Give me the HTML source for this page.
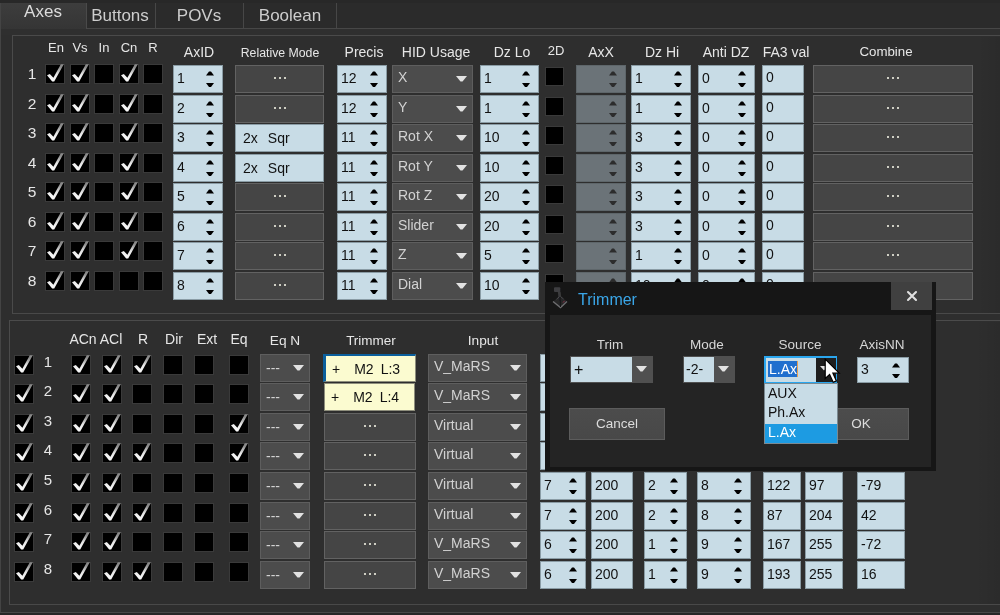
<!DOCTYPE html><html><head><meta charset="utf-8"><style>

html,body{margin:0;padding:0;}
body{width:1000px;height:615px;overflow:hidden;position:relative;background:#2e2e2e;font-family:"Liberation Sans", sans-serif;}
.t{position:absolute;white-space:nowrap;will-change:transform;}
.cb{position:absolute;background:#000;border:1px solid #3a3a3a;}
.sp{position:absolute;border:1px solid #8a9ca5;}
.cm{position:absolute;background:#4c4c4c;border:1px solid #5e5e5e;}
.bt{position:absolute;background:#454545;border:1px solid #626262;}
.dt{position:absolute;width:2px;height:2px;background:#cfcfc4;}
.dots{position:absolute;left:0;right:0;text-align:center;font-size:14px;line-height:8px;color:#d8d8d8;letter-spacing:1px;}
.ln{position:absolute;background:#474747;}

</style></head><body>
<svg width="0" height="0" style="position:absolute;left:0;top:0"><defs><linearGradient id="cg" x1="0" y1="1" x2="0.3" y2="0"><stop offset="0" stop-color="#ffffff"/><stop offset="0.55" stop-color="#e6e6e6"/><stop offset="1" stop-color="#8a8a8a"/></linearGradient></defs></svg>
<div style="position:absolute;left:0px;top:0px;width:1000px;height:28px;background:#2b2b2b"></div>
<div style="position:absolute;left:0px;top:0px;width:1000px;height:3px;background:#282828"></div>
<div style="position:absolute;left:0px;top:3px;width:1px;height:610px;background:#444"></div>
<div style="position:absolute;left:1px;top:3px;width:85px;height:26px;background:linear-gradient(#3d3d3d,#353535)"></div>
<div style="position:absolute;left:86px;top:3px;width:1px;height:26px;background:#4a4a4a"></div>
<div style="position:absolute;left:87px;top:28px;width:913px;height:1px;background:#474747"></div>
<div style="position:absolute;left:155px;top:3px;width:1px;height:25px;background:#474747"></div>
<div style="position:absolute;left:243px;top:3px;width:1px;height:25px;background:#474747"></div>
<div style="position:absolute;left:336px;top:3px;width:1px;height:25px;background:#474747"></div>
<div class="t" style="left:-157px;width:400px;text-align:center;top:3.30px;font-size:17px;line-height:17px;color:#dcdcdc;">Axes</div>
<div class="t" style="left:-80.5px;width:400px;text-align:center;top:7.00px;font-size:17px;line-height:17px;color:#cdcdcd;">Buttons</div>
<div class="t" style="left:-1px;width:400px;text-align:center;top:7.00px;font-size:17px;line-height:17px;color:#cdcdcd;">POVs</div>
<div class="t" style="left:90px;width:400px;text-align:center;top:7.00px;font-size:17px;line-height:17px;color:#cdcdcd;">Boolean</div>
<div style="position:absolute;left:1px;top:29px;width:999px;height:6px;background:#2f2f2f"></div>
<div style="position:absolute;left:0px;top:612px;width:1000px;height:1px;background:#474747"></div>
<div style="position:absolute;left:0px;top:613px;width:1000px;height:2px;background:#262626"></div>
<div style="position:absolute;left:12px;top:35px;width:988px;height:1px;background:#4a4a4a"></div>
<div style="position:absolute;left:12px;top:35px;width:1px;height:279px;background:#4a4a4a"></div>
<div style="position:absolute;left:12px;top:313px;width:988px;height:1px;background:#494949"></div>
<div style="position:absolute;left:9px;top:320px;width:991px;height:1px;background:#4b4b4b"></div>
<div style="position:absolute;left:9px;top:320px;width:1px;height:285px;background:#4b4b4b"></div>
<div style="position:absolute;left:9px;top:604px;width:991px;height:1px;background:#494949"></div>
<div style="position:absolute;left:978px;top:37px;width:22px;height:276px;background:linear-gradient(90deg, rgba(0,0,0,0), rgba(0,0,0,0.07))"></div>
<div style="position:absolute;left:975px;top:322px;width:25px;height:282px;background:linear-gradient(90deg, rgba(0,0,0,0), rgba(0,0,0,0.07))"></div>
<div class="t" style="left:-144.5px;width:400px;text-align:center;top:40.94px;font-size:13px;line-height:13px;color:#e6e6e6;">En</div>
<div class="t" style="left:-120.5px;width:400px;text-align:center;top:40.94px;font-size:13px;line-height:13px;color:#e6e6e6;">Vs</div>
<div class="t" style="left:-96px;width:400px;text-align:center;top:40.94px;font-size:13px;line-height:13px;color:#e6e6e6;">In</div>
<div class="t" style="left:-71.5px;width:400px;text-align:center;top:40.94px;font-size:13px;line-height:13px;color:#e6e6e6;">Cn</div>
<div class="t" style="left:-47px;width:400px;text-align:center;top:40.94px;font-size:13px;line-height:13px;color:#e6e6e6;">R</div>
<div class="t" style="left:-1px;width:400px;text-align:center;top:44.78px;font-size:14px;line-height:14px;color:#e6e6e6;">AxID</div>
<div class="t" style="left:80px;width:400px;text-align:center;top:46.55px;font-size:12.3px;line-height:12.3px;color:#e6e6e6;">Relative Mode</div>
<div class="t" style="left:164px;width:400px;text-align:center;top:44.78px;font-size:14px;line-height:14px;color:#e6e6e6;">Precis</div>
<div class="t" style="left:236px;width:400px;text-align:center;top:44.78px;font-size:14px;line-height:14px;color:#e6e6e6;">HID Usage</div>
<div class="t" style="left:311.5px;width:400px;text-align:center;top:44.78px;font-size:14px;line-height:14px;color:#e6e6e6;">Dz Lo</div>
<div class="t" style="left:355.5px;width:400px;text-align:center;top:43.94px;font-size:13px;line-height:13px;color:#e6e6e6;">2D</div>
<div class="t" style="left:400.5px;width:400px;text-align:center;top:44.78px;font-size:14px;line-height:14px;color:#e6e6e6;">AxX</div>
<div class="t" style="left:462px;width:400px;text-align:center;top:44.78px;font-size:14px;line-height:14px;color:#e6e6e6;">Dz Hi</div>
<div class="t" style="left:526px;width:400px;text-align:center;top:44.78px;font-size:14px;line-height:14px;color:#e6e6e6;">Anti DZ</div>
<div class="t" style="left:586px;width:400px;text-align:center;top:44.78px;font-size:14px;line-height:14px;color:#e6e6e6;">FA3 val</div>
<div class="t" style="left:686px;width:400px;text-align:center;top:45.19px;font-size:13.3px;line-height:13.3px;color:#e6e6e6;">Combine</div>
<div class="t" style="left:-168.5px;width:400px;text-align:center;top:65.54px;font-size:15.5px;line-height:15.5px;color:#e6e6e6;">1</div>
<div class="cb" style="left:45px;top:63.5px;width:18px;height:18px;"><svg width="20" height="22" viewBox="0 0 20 22" style="position:absolute;left:0;top:-2px"><path d="M1 12.3 L3.8 10.9 L7.4 14.8 L14.8 1.3 L17.8 1.3 L8.2 18.5 L6.2 18.5 Z" fill="url(#cg)"/></svg></div>
<div class="cb" style="left:69.5px;top:63.5px;width:18px;height:18px;"><svg width="20" height="22" viewBox="0 0 20 22" style="position:absolute;left:0;top:-2px"><path d="M1 12.3 L3.8 10.9 L7.4 14.8 L14.8 1.3 L17.8 1.3 L8.2 18.5 L6.2 18.5 Z" fill="url(#cg)"/></svg></div>
<div class="cb" style="left:94px;top:63.5px;width:18px;height:18px;"></div>
<div class="cb" style="left:118.5px;top:63.5px;width:18px;height:18px;"><svg width="20" height="22" viewBox="0 0 20 22" style="position:absolute;left:0;top:-2px"><path d="M1 12.3 L3.8 10.9 L7.4 14.8 L14.8 1.3 L17.8 1.3 L8.2 18.5 L6.2 18.5 Z" fill="url(#cg)"/></svg></div>
<div class="cb" style="left:143px;top:63.5px;width:18px;height:18px;"></div>
<div class="sp" style="left:173px;top:65px;width:48px;height:26px;background:#c8dce6;border-color:#8a9ca5"><div class="t" style="left:3px;top:4.7px;font-size:14px;line-height:14px;color:#111">1</div><svg width="8" height="5" style="position:absolute;left:32px;top:5px"><path d="M0 4.5 L3 0.5 L5 0.5 L8 4.5 Z" fill="#000"/></svg><svg width="8" height="5" style="position:absolute;left:32px;top:16.8px"><path d="M0 0 L8 0 L5 4 L3 4 Z" fill="#000"/></svg></div>
<div class="bt" style="left:235px;top:65px;width:87px;height:26px;"><div class="dt" style="left:37.5px;top:11.4px"></div><div class="dt" style="left:42.5px;top:11.4px"></div><div class="dt" style="left:47.5px;top:11.4px"></div></div>
<div class="sp" style="left:337px;top:65px;width:48px;height:26px;background:#c8dce6;border-color:#8a9ca5"><div class="t" style="left:3px;top:4.7px;font-size:14px;line-height:14px;color:#111">12</div><svg width="8" height="5" style="position:absolute;left:32px;top:5px"><path d="M0 4.5 L3 0.5 L5 0.5 L8 4.5 Z" fill="#000"/></svg><svg width="8" height="5" style="position:absolute;left:32px;top:16.8px"><path d="M0 0 L8 0 L5 4 L3 4 Z" fill="#000"/></svg></div>
<div class="cm" style="left:392px;top:65px;width:79px;height:26px;"><div class="t" style="left:5px;top:4.3px;font-size:14px;line-height:14px;color:#d2d2d2">X</div><svg width="11" height="6" style="position:absolute;left:63px;top:10px"><path d="M0 0 L11 0 L6.5 5.5 L4.5 5.5 Z" fill="#e2e2e2"/></svg></div>
<div class="sp" style="left:480px;top:65px;width:57px;height:26px;background:#c8dce6;border-color:#8a9ca5"><div class="t" style="left:3px;top:4.7px;font-size:14px;line-height:14px;color:#111">1</div><svg width="8" height="5" style="position:absolute;left:41px;top:5px"><path d="M0 4.5 L3 0.5 L5 0.5 L8 4.5 Z" fill="#000"/></svg><svg width="8" height="5" style="position:absolute;left:41px;top:16.8px"><path d="M0 0 L8 0 L5 4 L3 4 Z" fill="#000"/></svg></div>
<div class="cb" style="left:544.5px;top:66.5px;width:17px;height:17px;"></div>
<div class="sp" style="left:576px;top:65px;width:47.5px;height:26px;background:#6b7378;border-color:#5e666a"><svg width="8" height="5" style="position:absolute;left:31.5px;top:5px"><path d="M0 4.5 L3 0.5 L5 0.5 L8 4.5 Z" fill="#2c2c2c"/></svg><svg width="8" height="5" style="position:absolute;left:31.5px;top:16.8px"><path d="M0 0 L8 0 L5 4 L3 4 Z" fill="#2c2c2c"/></svg></div>
<div class="sp" style="left:631px;top:65px;width:57.5px;height:26px;background:#c8dce6;border-color:#8a9ca5"><div class="t" style="left:3px;top:4.7px;font-size:14px;line-height:14px;color:#111">1</div><svg width="8" height="5" style="position:absolute;left:41.5px;top:5px"><path d="M0 4.5 L3 0.5 L5 0.5 L8 4.5 Z" fill="#000"/></svg><svg width="8" height="5" style="position:absolute;left:41.5px;top:16.8px"><path d="M0 0 L8 0 L5 4 L3 4 Z" fill="#000"/></svg></div>
<div class="sp" style="left:697.5px;top:65px;width:55px;height:26px;background:#c8dce6;border-color:#8a9ca5"><div class="t" style="left:3px;top:4.7px;font-size:14px;line-height:14px;color:#111">0</div><svg width="8" height="5" style="position:absolute;left:39px;top:5px"><path d="M0 4.5 L3 0.5 L5 0.5 L8 4.5 Z" fill="#000"/></svg><svg width="8" height="5" style="position:absolute;left:39px;top:16.8px"><path d="M0 0 L8 0 L5 4 L3 4 Z" fill="#000"/></svg></div>
<div class="sp" style="left:761.5px;top:65px;width:40px;height:26px;background:#c8dce6;border-color:#8a9ca5;box-sizing:content-box;"><div class="t" style="left:3px;top:4.3px;font-size:14px;line-height:14px;color:#111;white-space:pre">0</div></div>
<div class="bt" style="left:813px;top:65px;width:158px;height:26px;"><div class="dt" style="left:73.0px;top:11.4px"></div><div class="dt" style="left:78.0px;top:11.4px"></div><div class="dt" style="left:83.0px;top:11.4px"></div></div>
<div class="t" style="left:-168.5px;width:400px;text-align:center;top:95.54px;font-size:15.5px;line-height:15.5px;color:#e6e6e6;">2</div>
<div class="cb" style="left:45px;top:93.5px;width:18px;height:18px;"><svg width="20" height="22" viewBox="0 0 20 22" style="position:absolute;left:0;top:-2px"><path d="M1 12.3 L3.8 10.9 L7.4 14.8 L14.8 1.3 L17.8 1.3 L8.2 18.5 L6.2 18.5 Z" fill="url(#cg)"/></svg></div>
<div class="cb" style="left:69.5px;top:93.5px;width:18px;height:18px;"><svg width="20" height="22" viewBox="0 0 20 22" style="position:absolute;left:0;top:-2px"><path d="M1 12.3 L3.8 10.9 L7.4 14.8 L14.8 1.3 L17.8 1.3 L8.2 18.5 L6.2 18.5 Z" fill="url(#cg)"/></svg></div>
<div class="cb" style="left:94px;top:93.5px;width:18px;height:18px;"></div>
<div class="cb" style="left:118.5px;top:93.5px;width:18px;height:18px;"><svg width="20" height="22" viewBox="0 0 20 22" style="position:absolute;left:0;top:-2px"><path d="M1 12.3 L3.8 10.9 L7.4 14.8 L14.8 1.3 L17.8 1.3 L8.2 18.5 L6.2 18.5 Z" fill="url(#cg)"/></svg></div>
<div class="cb" style="left:143px;top:93.5px;width:18px;height:18px;"></div>
<div class="sp" style="left:173px;top:95px;width:48px;height:26px;background:#c8dce6;border-color:#8a9ca5"><div class="t" style="left:3px;top:4.7px;font-size:14px;line-height:14px;color:#111">2</div><svg width="8" height="5" style="position:absolute;left:32px;top:5px"><path d="M0 4.5 L3 0.5 L5 0.5 L8 4.5 Z" fill="#000"/></svg><svg width="8" height="5" style="position:absolute;left:32px;top:16.8px"><path d="M0 0 L8 0 L5 4 L3 4 Z" fill="#000"/></svg></div>
<div class="bt" style="left:235px;top:95px;width:87px;height:26px;"><div class="dt" style="left:37.5px;top:11.4px"></div><div class="dt" style="left:42.5px;top:11.4px"></div><div class="dt" style="left:47.5px;top:11.4px"></div></div>
<div class="sp" style="left:337px;top:95px;width:48px;height:26px;background:#c8dce6;border-color:#8a9ca5"><div class="t" style="left:3px;top:4.7px;font-size:14px;line-height:14px;color:#111">12</div><svg width="8" height="5" style="position:absolute;left:32px;top:5px"><path d="M0 4.5 L3 0.5 L5 0.5 L8 4.5 Z" fill="#000"/></svg><svg width="8" height="5" style="position:absolute;left:32px;top:16.8px"><path d="M0 0 L8 0 L5 4 L3 4 Z" fill="#000"/></svg></div>
<div class="cm" style="left:392px;top:95px;width:79px;height:26px;"><div class="t" style="left:5px;top:4.3px;font-size:14px;line-height:14px;color:#d2d2d2">Y</div><svg width="11" height="6" style="position:absolute;left:63px;top:10px"><path d="M0 0 L11 0 L6.5 5.5 L4.5 5.5 Z" fill="#e2e2e2"/></svg></div>
<div class="sp" style="left:480px;top:95px;width:57px;height:26px;background:#c8dce6;border-color:#8a9ca5"><div class="t" style="left:3px;top:4.7px;font-size:14px;line-height:14px;color:#111">1</div><svg width="8" height="5" style="position:absolute;left:41px;top:5px"><path d="M0 4.5 L3 0.5 L5 0.5 L8 4.5 Z" fill="#000"/></svg><svg width="8" height="5" style="position:absolute;left:41px;top:16.8px"><path d="M0 0 L8 0 L5 4 L3 4 Z" fill="#000"/></svg></div>
<div class="cb" style="left:544.5px;top:96.5px;width:17px;height:17px;"></div>
<div class="sp" style="left:576px;top:95px;width:47.5px;height:26px;background:#6b7378;border-color:#5e666a"><svg width="8" height="5" style="position:absolute;left:31.5px;top:5px"><path d="M0 4.5 L3 0.5 L5 0.5 L8 4.5 Z" fill="#2c2c2c"/></svg><svg width="8" height="5" style="position:absolute;left:31.5px;top:16.8px"><path d="M0 0 L8 0 L5 4 L3 4 Z" fill="#2c2c2c"/></svg></div>
<div class="sp" style="left:631px;top:95px;width:57.5px;height:26px;background:#c8dce6;border-color:#8a9ca5"><div class="t" style="left:3px;top:4.7px;font-size:14px;line-height:14px;color:#111">1</div><svg width="8" height="5" style="position:absolute;left:41.5px;top:5px"><path d="M0 4.5 L3 0.5 L5 0.5 L8 4.5 Z" fill="#000"/></svg><svg width="8" height="5" style="position:absolute;left:41.5px;top:16.8px"><path d="M0 0 L8 0 L5 4 L3 4 Z" fill="#000"/></svg></div>
<div class="sp" style="left:697.5px;top:95px;width:55px;height:26px;background:#c8dce6;border-color:#8a9ca5"><div class="t" style="left:3px;top:4.7px;font-size:14px;line-height:14px;color:#111">0</div><svg width="8" height="5" style="position:absolute;left:39px;top:5px"><path d="M0 4.5 L3 0.5 L5 0.5 L8 4.5 Z" fill="#000"/></svg><svg width="8" height="5" style="position:absolute;left:39px;top:16.8px"><path d="M0 0 L8 0 L5 4 L3 4 Z" fill="#000"/></svg></div>
<div class="sp" style="left:761.5px;top:95px;width:40px;height:26px;background:#c8dce6;border-color:#8a9ca5;box-sizing:content-box;"><div class="t" style="left:3px;top:4.3px;font-size:14px;line-height:14px;color:#111;white-space:pre">0</div></div>
<div class="bt" style="left:813px;top:95px;width:158px;height:26px;"><div class="dt" style="left:73.0px;top:11.4px"></div><div class="dt" style="left:78.0px;top:11.4px"></div><div class="dt" style="left:83.0px;top:11.4px"></div></div>
<div class="t" style="left:-168.5px;width:400px;text-align:center;top:124.54px;font-size:15.5px;line-height:15.5px;color:#e6e6e6;">3</div>
<div class="cb" style="left:45px;top:122.5px;width:18px;height:18px;"><svg width="20" height="22" viewBox="0 0 20 22" style="position:absolute;left:0;top:-2px"><path d="M1 12.3 L3.8 10.9 L7.4 14.8 L14.8 1.3 L17.8 1.3 L8.2 18.5 L6.2 18.5 Z" fill="url(#cg)"/></svg></div>
<div class="cb" style="left:69.5px;top:122.5px;width:18px;height:18px;"><svg width="20" height="22" viewBox="0 0 20 22" style="position:absolute;left:0;top:-2px"><path d="M1 12.3 L3.8 10.9 L7.4 14.8 L14.8 1.3 L17.8 1.3 L8.2 18.5 L6.2 18.5 Z" fill="url(#cg)"/></svg></div>
<div class="cb" style="left:94px;top:122.5px;width:18px;height:18px;"></div>
<div class="cb" style="left:118.5px;top:122.5px;width:18px;height:18px;"><svg width="20" height="22" viewBox="0 0 20 22" style="position:absolute;left:0;top:-2px"><path d="M1 12.3 L3.8 10.9 L7.4 14.8 L14.8 1.3 L17.8 1.3 L8.2 18.5 L6.2 18.5 Z" fill="url(#cg)"/></svg></div>
<div class="cb" style="left:143px;top:122.5px;width:18px;height:18px;"></div>
<div class="sp" style="left:173px;top:124px;width:48px;height:26px;background:#c8dce6;border-color:#8a9ca5"><div class="t" style="left:3px;top:4.7px;font-size:14px;line-height:14px;color:#111">3</div><svg width="8" height="5" style="position:absolute;left:32px;top:5px"><path d="M0 4.5 L3 0.5 L5 0.5 L8 4.5 Z" fill="#000"/></svg><svg width="8" height="5" style="position:absolute;left:32px;top:16.8px"><path d="M0 0 L8 0 L5 4 L3 4 Z" fill="#000"/></svg></div>
<div class="sp" style="left:235px;top:124px;width:87px;height:26px;background:#c8dce6;border-color:#8a9ca5;box-sizing:content-box;"><div class="t" style="left:7px;top:5.8px;font-size:14px;line-height:14px;color:#111;white-space:pre">2x<span style="margin-left:10px">Sqr</span></div></div>
<div class="sp" style="left:337px;top:124px;width:48px;height:26px;background:#c8dce6;border-color:#8a9ca5"><div class="t" style="left:3px;top:4.7px;font-size:14px;line-height:14px;color:#111">11</div><svg width="8" height="5" style="position:absolute;left:32px;top:5px"><path d="M0 4.5 L3 0.5 L5 0.5 L8 4.5 Z" fill="#000"/></svg><svg width="8" height="5" style="position:absolute;left:32px;top:16.8px"><path d="M0 0 L8 0 L5 4 L3 4 Z" fill="#000"/></svg></div>
<div class="cm" style="left:392px;top:124px;width:79px;height:26px;"><div class="t" style="left:5px;top:4.3px;font-size:14px;line-height:14px;color:#d2d2d2">Rot X</div><svg width="11" height="6" style="position:absolute;left:63px;top:10px"><path d="M0 0 L11 0 L6.5 5.5 L4.5 5.5 Z" fill="#e2e2e2"/></svg></div>
<div class="sp" style="left:480px;top:124px;width:57px;height:26px;background:#c8dce6;border-color:#8a9ca5"><div class="t" style="left:3px;top:4.7px;font-size:14px;line-height:14px;color:#111">10</div><svg width="8" height="5" style="position:absolute;left:41px;top:5px"><path d="M0 4.5 L3 0.5 L5 0.5 L8 4.5 Z" fill="#000"/></svg><svg width="8" height="5" style="position:absolute;left:41px;top:16.8px"><path d="M0 0 L8 0 L5 4 L3 4 Z" fill="#000"/></svg></div>
<div class="cb" style="left:544.5px;top:125.5px;width:17px;height:17px;"></div>
<div class="sp" style="left:576px;top:124px;width:47.5px;height:26px;background:#6b7378;border-color:#5e666a"><svg width="8" height="5" style="position:absolute;left:31.5px;top:5px"><path d="M0 4.5 L3 0.5 L5 0.5 L8 4.5 Z" fill="#2c2c2c"/></svg><svg width="8" height="5" style="position:absolute;left:31.5px;top:16.8px"><path d="M0 0 L8 0 L5 4 L3 4 Z" fill="#2c2c2c"/></svg></div>
<div class="sp" style="left:631px;top:124px;width:57.5px;height:26px;background:#c8dce6;border-color:#8a9ca5"><div class="t" style="left:3px;top:4.7px;font-size:14px;line-height:14px;color:#111">3</div><svg width="8" height="5" style="position:absolute;left:41.5px;top:5px"><path d="M0 4.5 L3 0.5 L5 0.5 L8 4.5 Z" fill="#000"/></svg><svg width="8" height="5" style="position:absolute;left:41.5px;top:16.8px"><path d="M0 0 L8 0 L5 4 L3 4 Z" fill="#000"/></svg></div>
<div class="sp" style="left:697.5px;top:124px;width:55px;height:26px;background:#c8dce6;border-color:#8a9ca5"><div class="t" style="left:3px;top:4.7px;font-size:14px;line-height:14px;color:#111">0</div><svg width="8" height="5" style="position:absolute;left:39px;top:5px"><path d="M0 4.5 L3 0.5 L5 0.5 L8 4.5 Z" fill="#000"/></svg><svg width="8" height="5" style="position:absolute;left:39px;top:16.8px"><path d="M0 0 L8 0 L5 4 L3 4 Z" fill="#000"/></svg></div>
<div class="sp" style="left:761.5px;top:124px;width:40px;height:26px;background:#c8dce6;border-color:#8a9ca5;box-sizing:content-box;"><div class="t" style="left:3px;top:4.3px;font-size:14px;line-height:14px;color:#111;white-space:pre">0</div></div>
<div class="bt" style="left:813px;top:124px;width:158px;height:26px;"><div class="dt" style="left:73.0px;top:11.4px"></div><div class="dt" style="left:78.0px;top:11.4px"></div><div class="dt" style="left:83.0px;top:11.4px"></div></div>
<div class="t" style="left:-168.5px;width:400px;text-align:center;top:154.54px;font-size:15.5px;line-height:15.5px;color:#e6e6e6;">4</div>
<div class="cb" style="left:45px;top:152.5px;width:18px;height:18px;"><svg width="20" height="22" viewBox="0 0 20 22" style="position:absolute;left:0;top:-2px"><path d="M1 12.3 L3.8 10.9 L7.4 14.8 L14.8 1.3 L17.8 1.3 L8.2 18.5 L6.2 18.5 Z" fill="url(#cg)"/></svg></div>
<div class="cb" style="left:69.5px;top:152.5px;width:18px;height:18px;"><svg width="20" height="22" viewBox="0 0 20 22" style="position:absolute;left:0;top:-2px"><path d="M1 12.3 L3.8 10.9 L7.4 14.8 L14.8 1.3 L17.8 1.3 L8.2 18.5 L6.2 18.5 Z" fill="url(#cg)"/></svg></div>
<div class="cb" style="left:94px;top:152.5px;width:18px;height:18px;"></div>
<div class="cb" style="left:118.5px;top:152.5px;width:18px;height:18px;"><svg width="20" height="22" viewBox="0 0 20 22" style="position:absolute;left:0;top:-2px"><path d="M1 12.3 L3.8 10.9 L7.4 14.8 L14.8 1.3 L17.8 1.3 L8.2 18.5 L6.2 18.5 Z" fill="url(#cg)"/></svg></div>
<div class="cb" style="left:143px;top:152.5px;width:18px;height:18px;"></div>
<div class="sp" style="left:173px;top:154px;width:48px;height:26px;background:#c8dce6;border-color:#8a9ca5"><div class="t" style="left:3px;top:4.7px;font-size:14px;line-height:14px;color:#111">4</div><svg width="8" height="5" style="position:absolute;left:32px;top:5px"><path d="M0 4.5 L3 0.5 L5 0.5 L8 4.5 Z" fill="#000"/></svg><svg width="8" height="5" style="position:absolute;left:32px;top:16.8px"><path d="M0 0 L8 0 L5 4 L3 4 Z" fill="#000"/></svg></div>
<div class="sp" style="left:235px;top:154px;width:87px;height:26px;background:#c8dce6;border-color:#8a9ca5;box-sizing:content-box;"><div class="t" style="left:7px;top:5.8px;font-size:14px;line-height:14px;color:#111;white-space:pre">2x<span style="margin-left:10px">Sqr</span></div></div>
<div class="sp" style="left:337px;top:154px;width:48px;height:26px;background:#c8dce6;border-color:#8a9ca5"><div class="t" style="left:3px;top:4.7px;font-size:14px;line-height:14px;color:#111">11</div><svg width="8" height="5" style="position:absolute;left:32px;top:5px"><path d="M0 4.5 L3 0.5 L5 0.5 L8 4.5 Z" fill="#000"/></svg><svg width="8" height="5" style="position:absolute;left:32px;top:16.8px"><path d="M0 0 L8 0 L5 4 L3 4 Z" fill="#000"/></svg></div>
<div class="cm" style="left:392px;top:154px;width:79px;height:26px;"><div class="t" style="left:5px;top:4.3px;font-size:14px;line-height:14px;color:#d2d2d2">Rot Y</div><svg width="11" height="6" style="position:absolute;left:63px;top:10px"><path d="M0 0 L11 0 L6.5 5.5 L4.5 5.5 Z" fill="#e2e2e2"/></svg></div>
<div class="sp" style="left:480px;top:154px;width:57px;height:26px;background:#c8dce6;border-color:#8a9ca5"><div class="t" style="left:3px;top:4.7px;font-size:14px;line-height:14px;color:#111">10</div><svg width="8" height="5" style="position:absolute;left:41px;top:5px"><path d="M0 4.5 L3 0.5 L5 0.5 L8 4.5 Z" fill="#000"/></svg><svg width="8" height="5" style="position:absolute;left:41px;top:16.8px"><path d="M0 0 L8 0 L5 4 L3 4 Z" fill="#000"/></svg></div>
<div class="cb" style="left:544.5px;top:155.5px;width:17px;height:17px;"></div>
<div class="sp" style="left:576px;top:154px;width:47.5px;height:26px;background:#6b7378;border-color:#5e666a"><svg width="8" height="5" style="position:absolute;left:31.5px;top:5px"><path d="M0 4.5 L3 0.5 L5 0.5 L8 4.5 Z" fill="#2c2c2c"/></svg><svg width="8" height="5" style="position:absolute;left:31.5px;top:16.8px"><path d="M0 0 L8 0 L5 4 L3 4 Z" fill="#2c2c2c"/></svg></div>
<div class="sp" style="left:631px;top:154px;width:57.5px;height:26px;background:#c8dce6;border-color:#8a9ca5"><div class="t" style="left:3px;top:4.7px;font-size:14px;line-height:14px;color:#111">3</div><svg width="8" height="5" style="position:absolute;left:41.5px;top:5px"><path d="M0 4.5 L3 0.5 L5 0.5 L8 4.5 Z" fill="#000"/></svg><svg width="8" height="5" style="position:absolute;left:41.5px;top:16.8px"><path d="M0 0 L8 0 L5 4 L3 4 Z" fill="#000"/></svg></div>
<div class="sp" style="left:697.5px;top:154px;width:55px;height:26px;background:#c8dce6;border-color:#8a9ca5"><div class="t" style="left:3px;top:4.7px;font-size:14px;line-height:14px;color:#111">0</div><svg width="8" height="5" style="position:absolute;left:39px;top:5px"><path d="M0 4.5 L3 0.5 L5 0.5 L8 4.5 Z" fill="#000"/></svg><svg width="8" height="5" style="position:absolute;left:39px;top:16.8px"><path d="M0 0 L8 0 L5 4 L3 4 Z" fill="#000"/></svg></div>
<div class="sp" style="left:761.5px;top:154px;width:40px;height:26px;background:#c8dce6;border-color:#8a9ca5;box-sizing:content-box;"><div class="t" style="left:3px;top:4.3px;font-size:14px;line-height:14px;color:#111;white-space:pre">0</div></div>
<div class="bt" style="left:813px;top:154px;width:158px;height:26px;"><div class="dt" style="left:73.0px;top:11.4px"></div><div class="dt" style="left:78.0px;top:11.4px"></div><div class="dt" style="left:83.0px;top:11.4px"></div></div>
<div class="t" style="left:-168.5px;width:400px;text-align:center;top:183.54px;font-size:15.5px;line-height:15.5px;color:#e6e6e6;">5</div>
<div class="cb" style="left:45px;top:181.5px;width:18px;height:18px;"><svg width="20" height="22" viewBox="0 0 20 22" style="position:absolute;left:0;top:-2px"><path d="M1 12.3 L3.8 10.9 L7.4 14.8 L14.8 1.3 L17.8 1.3 L8.2 18.5 L6.2 18.5 Z" fill="url(#cg)"/></svg></div>
<div class="cb" style="left:69.5px;top:181.5px;width:18px;height:18px;"><svg width="20" height="22" viewBox="0 0 20 22" style="position:absolute;left:0;top:-2px"><path d="M1 12.3 L3.8 10.9 L7.4 14.8 L14.8 1.3 L17.8 1.3 L8.2 18.5 L6.2 18.5 Z" fill="url(#cg)"/></svg></div>
<div class="cb" style="left:94px;top:181.5px;width:18px;height:18px;"></div>
<div class="cb" style="left:118.5px;top:181.5px;width:18px;height:18px;"><svg width="20" height="22" viewBox="0 0 20 22" style="position:absolute;left:0;top:-2px"><path d="M1 12.3 L3.8 10.9 L7.4 14.8 L14.8 1.3 L17.8 1.3 L8.2 18.5 L6.2 18.5 Z" fill="url(#cg)"/></svg></div>
<div class="cb" style="left:143px;top:181.5px;width:18px;height:18px;"></div>
<div class="sp" style="left:173px;top:183px;width:48px;height:26px;background:#c8dce6;border-color:#8a9ca5"><div class="t" style="left:3px;top:4.7px;font-size:14px;line-height:14px;color:#111">5</div><svg width="8" height="5" style="position:absolute;left:32px;top:5px"><path d="M0 4.5 L3 0.5 L5 0.5 L8 4.5 Z" fill="#000"/></svg><svg width="8" height="5" style="position:absolute;left:32px;top:16.8px"><path d="M0 0 L8 0 L5 4 L3 4 Z" fill="#000"/></svg></div>
<div class="bt" style="left:235px;top:183px;width:87px;height:26px;"><div class="dt" style="left:37.5px;top:11.4px"></div><div class="dt" style="left:42.5px;top:11.4px"></div><div class="dt" style="left:47.5px;top:11.4px"></div></div>
<div class="sp" style="left:337px;top:183px;width:48px;height:26px;background:#c8dce6;border-color:#8a9ca5"><div class="t" style="left:3px;top:4.7px;font-size:14px;line-height:14px;color:#111">11</div><svg width="8" height="5" style="position:absolute;left:32px;top:5px"><path d="M0 4.5 L3 0.5 L5 0.5 L8 4.5 Z" fill="#000"/></svg><svg width="8" height="5" style="position:absolute;left:32px;top:16.8px"><path d="M0 0 L8 0 L5 4 L3 4 Z" fill="#000"/></svg></div>
<div class="cm" style="left:392px;top:183px;width:79px;height:26px;"><div class="t" style="left:5px;top:4.3px;font-size:14px;line-height:14px;color:#d2d2d2">Rot Z</div><svg width="11" height="6" style="position:absolute;left:63px;top:10px"><path d="M0 0 L11 0 L6.5 5.5 L4.5 5.5 Z" fill="#e2e2e2"/></svg></div>
<div class="sp" style="left:480px;top:183px;width:57px;height:26px;background:#c8dce6;border-color:#8a9ca5"><div class="t" style="left:3px;top:4.7px;font-size:14px;line-height:14px;color:#111">20</div><svg width="8" height="5" style="position:absolute;left:41px;top:5px"><path d="M0 4.5 L3 0.5 L5 0.5 L8 4.5 Z" fill="#000"/></svg><svg width="8" height="5" style="position:absolute;left:41px;top:16.8px"><path d="M0 0 L8 0 L5 4 L3 4 Z" fill="#000"/></svg></div>
<div class="cb" style="left:544.5px;top:184.5px;width:17px;height:17px;"></div>
<div class="sp" style="left:576px;top:183px;width:47.5px;height:26px;background:#6b7378;border-color:#5e666a"><svg width="8" height="5" style="position:absolute;left:31.5px;top:5px"><path d="M0 4.5 L3 0.5 L5 0.5 L8 4.5 Z" fill="#2c2c2c"/></svg><svg width="8" height="5" style="position:absolute;left:31.5px;top:16.8px"><path d="M0 0 L8 0 L5 4 L3 4 Z" fill="#2c2c2c"/></svg></div>
<div class="sp" style="left:631px;top:183px;width:57.5px;height:26px;background:#c8dce6;border-color:#8a9ca5"><div class="t" style="left:3px;top:4.7px;font-size:14px;line-height:14px;color:#111">3</div><svg width="8" height="5" style="position:absolute;left:41.5px;top:5px"><path d="M0 4.5 L3 0.5 L5 0.5 L8 4.5 Z" fill="#000"/></svg><svg width="8" height="5" style="position:absolute;left:41.5px;top:16.8px"><path d="M0 0 L8 0 L5 4 L3 4 Z" fill="#000"/></svg></div>
<div class="sp" style="left:697.5px;top:183px;width:55px;height:26px;background:#c8dce6;border-color:#8a9ca5"><div class="t" style="left:3px;top:4.7px;font-size:14px;line-height:14px;color:#111">0</div><svg width="8" height="5" style="position:absolute;left:39px;top:5px"><path d="M0 4.5 L3 0.5 L5 0.5 L8 4.5 Z" fill="#000"/></svg><svg width="8" height="5" style="position:absolute;left:39px;top:16.8px"><path d="M0 0 L8 0 L5 4 L3 4 Z" fill="#000"/></svg></div>
<div class="sp" style="left:761.5px;top:183px;width:40px;height:26px;background:#c8dce6;border-color:#8a9ca5;box-sizing:content-box;"><div class="t" style="left:3px;top:4.3px;font-size:14px;line-height:14px;color:#111;white-space:pre">0</div></div>
<div class="bt" style="left:813px;top:183px;width:158px;height:26px;"><div class="dt" style="left:73.0px;top:11.4px"></div><div class="dt" style="left:78.0px;top:11.4px"></div><div class="dt" style="left:83.0px;top:11.4px"></div></div>
<div class="t" style="left:-168.5px;width:400px;text-align:center;top:213.54px;font-size:15.5px;line-height:15.5px;color:#e6e6e6;">6</div>
<div class="cb" style="left:45px;top:211.5px;width:18px;height:18px;"><svg width="20" height="22" viewBox="0 0 20 22" style="position:absolute;left:0;top:-2px"><path d="M1 12.3 L3.8 10.9 L7.4 14.8 L14.8 1.3 L17.8 1.3 L8.2 18.5 L6.2 18.5 Z" fill="url(#cg)"/></svg></div>
<div class="cb" style="left:69.5px;top:211.5px;width:18px;height:18px;"><svg width="20" height="22" viewBox="0 0 20 22" style="position:absolute;left:0;top:-2px"><path d="M1 12.3 L3.8 10.9 L7.4 14.8 L14.8 1.3 L17.8 1.3 L8.2 18.5 L6.2 18.5 Z" fill="url(#cg)"/></svg></div>
<div class="cb" style="left:94px;top:211.5px;width:18px;height:18px;"></div>
<div class="cb" style="left:118.5px;top:211.5px;width:18px;height:18px;"><svg width="20" height="22" viewBox="0 0 20 22" style="position:absolute;left:0;top:-2px"><path d="M1 12.3 L3.8 10.9 L7.4 14.8 L14.8 1.3 L17.8 1.3 L8.2 18.5 L6.2 18.5 Z" fill="url(#cg)"/></svg></div>
<div class="cb" style="left:143px;top:211.5px;width:18px;height:18px;"></div>
<div class="sp" style="left:173px;top:213px;width:48px;height:26px;background:#c8dce6;border-color:#8a9ca5"><div class="t" style="left:3px;top:4.7px;font-size:14px;line-height:14px;color:#111">6</div><svg width="8" height="5" style="position:absolute;left:32px;top:5px"><path d="M0 4.5 L3 0.5 L5 0.5 L8 4.5 Z" fill="#000"/></svg><svg width="8" height="5" style="position:absolute;left:32px;top:16.8px"><path d="M0 0 L8 0 L5 4 L3 4 Z" fill="#000"/></svg></div>
<div class="bt" style="left:235px;top:213px;width:87px;height:26px;"><div class="dt" style="left:37.5px;top:11.4px"></div><div class="dt" style="left:42.5px;top:11.4px"></div><div class="dt" style="left:47.5px;top:11.4px"></div></div>
<div class="sp" style="left:337px;top:213px;width:48px;height:26px;background:#c8dce6;border-color:#8a9ca5"><div class="t" style="left:3px;top:4.7px;font-size:14px;line-height:14px;color:#111">11</div><svg width="8" height="5" style="position:absolute;left:32px;top:5px"><path d="M0 4.5 L3 0.5 L5 0.5 L8 4.5 Z" fill="#000"/></svg><svg width="8" height="5" style="position:absolute;left:32px;top:16.8px"><path d="M0 0 L8 0 L5 4 L3 4 Z" fill="#000"/></svg></div>
<div class="cm" style="left:392px;top:213px;width:79px;height:26px;"><div class="t" style="left:5px;top:4.3px;font-size:14px;line-height:14px;color:#d2d2d2">Slider</div><svg width="11" height="6" style="position:absolute;left:63px;top:10px"><path d="M0 0 L11 0 L6.5 5.5 L4.5 5.5 Z" fill="#e2e2e2"/></svg></div>
<div class="sp" style="left:480px;top:213px;width:57px;height:26px;background:#c8dce6;border-color:#8a9ca5"><div class="t" style="left:3px;top:4.7px;font-size:14px;line-height:14px;color:#111">20</div><svg width="8" height="5" style="position:absolute;left:41px;top:5px"><path d="M0 4.5 L3 0.5 L5 0.5 L8 4.5 Z" fill="#000"/></svg><svg width="8" height="5" style="position:absolute;left:41px;top:16.8px"><path d="M0 0 L8 0 L5 4 L3 4 Z" fill="#000"/></svg></div>
<div class="cb" style="left:544.5px;top:214.5px;width:17px;height:17px;"></div>
<div class="sp" style="left:576px;top:213px;width:47.5px;height:26px;background:#6b7378;border-color:#5e666a"><svg width="8" height="5" style="position:absolute;left:31.5px;top:5px"><path d="M0 4.5 L3 0.5 L5 0.5 L8 4.5 Z" fill="#2c2c2c"/></svg><svg width="8" height="5" style="position:absolute;left:31.5px;top:16.8px"><path d="M0 0 L8 0 L5 4 L3 4 Z" fill="#2c2c2c"/></svg></div>
<div class="sp" style="left:631px;top:213px;width:57.5px;height:26px;background:#c8dce6;border-color:#8a9ca5"><div class="t" style="left:3px;top:4.7px;font-size:14px;line-height:14px;color:#111">3</div><svg width="8" height="5" style="position:absolute;left:41.5px;top:5px"><path d="M0 4.5 L3 0.5 L5 0.5 L8 4.5 Z" fill="#000"/></svg><svg width="8" height="5" style="position:absolute;left:41.5px;top:16.8px"><path d="M0 0 L8 0 L5 4 L3 4 Z" fill="#000"/></svg></div>
<div class="sp" style="left:697.5px;top:213px;width:55px;height:26px;background:#c8dce6;border-color:#8a9ca5"><div class="t" style="left:3px;top:4.7px;font-size:14px;line-height:14px;color:#111">0</div><svg width="8" height="5" style="position:absolute;left:39px;top:5px"><path d="M0 4.5 L3 0.5 L5 0.5 L8 4.5 Z" fill="#000"/></svg><svg width="8" height="5" style="position:absolute;left:39px;top:16.8px"><path d="M0 0 L8 0 L5 4 L3 4 Z" fill="#000"/></svg></div>
<div class="sp" style="left:761.5px;top:213px;width:40px;height:26px;background:#c8dce6;border-color:#8a9ca5;box-sizing:content-box;"><div class="t" style="left:3px;top:4.3px;font-size:14px;line-height:14px;color:#111;white-space:pre">0</div></div>
<div class="bt" style="left:813px;top:213px;width:158px;height:26px;"><div class="dt" style="left:73.0px;top:11.4px"></div><div class="dt" style="left:78.0px;top:11.4px"></div><div class="dt" style="left:83.0px;top:11.4px"></div></div>
<div class="t" style="left:-168.5px;width:400px;text-align:center;top:242.54px;font-size:15.5px;line-height:15.5px;color:#e6e6e6;">7</div>
<div class="cb" style="left:45px;top:240.5px;width:18px;height:18px;"><svg width="20" height="22" viewBox="0 0 20 22" style="position:absolute;left:0;top:-2px"><path d="M1 12.3 L3.8 10.9 L7.4 14.8 L14.8 1.3 L17.8 1.3 L8.2 18.5 L6.2 18.5 Z" fill="url(#cg)"/></svg></div>
<div class="cb" style="left:69.5px;top:240.5px;width:18px;height:18px;"><svg width="20" height="22" viewBox="0 0 20 22" style="position:absolute;left:0;top:-2px"><path d="M1 12.3 L3.8 10.9 L7.4 14.8 L14.8 1.3 L17.8 1.3 L8.2 18.5 L6.2 18.5 Z" fill="url(#cg)"/></svg></div>
<div class="cb" style="left:94px;top:240.5px;width:18px;height:18px;"></div>
<div class="cb" style="left:118.5px;top:240.5px;width:18px;height:18px;"><svg width="20" height="22" viewBox="0 0 20 22" style="position:absolute;left:0;top:-2px"><path d="M1 12.3 L3.8 10.9 L7.4 14.8 L14.8 1.3 L17.8 1.3 L8.2 18.5 L6.2 18.5 Z" fill="url(#cg)"/></svg></div>
<div class="cb" style="left:143px;top:240.5px;width:18px;height:18px;"></div>
<div class="sp" style="left:173px;top:242px;width:48px;height:26px;background:#c8dce6;border-color:#8a9ca5"><div class="t" style="left:3px;top:4.7px;font-size:14px;line-height:14px;color:#111">7</div><svg width="8" height="5" style="position:absolute;left:32px;top:5px"><path d="M0 4.5 L3 0.5 L5 0.5 L8 4.5 Z" fill="#000"/></svg><svg width="8" height="5" style="position:absolute;left:32px;top:16.8px"><path d="M0 0 L8 0 L5 4 L3 4 Z" fill="#000"/></svg></div>
<div class="bt" style="left:235px;top:242px;width:87px;height:26px;"><div class="dt" style="left:37.5px;top:11.4px"></div><div class="dt" style="left:42.5px;top:11.4px"></div><div class="dt" style="left:47.5px;top:11.4px"></div></div>
<div class="sp" style="left:337px;top:242px;width:48px;height:26px;background:#c8dce6;border-color:#8a9ca5"><div class="t" style="left:3px;top:4.7px;font-size:14px;line-height:14px;color:#111">11</div><svg width="8" height="5" style="position:absolute;left:32px;top:5px"><path d="M0 4.5 L3 0.5 L5 0.5 L8 4.5 Z" fill="#000"/></svg><svg width="8" height="5" style="position:absolute;left:32px;top:16.8px"><path d="M0 0 L8 0 L5 4 L3 4 Z" fill="#000"/></svg></div>
<div class="cm" style="left:392px;top:242px;width:79px;height:26px;"><div class="t" style="left:5px;top:4.3px;font-size:14px;line-height:14px;color:#d2d2d2">Z</div><svg width="11" height="6" style="position:absolute;left:63px;top:10px"><path d="M0 0 L11 0 L6.5 5.5 L4.5 5.5 Z" fill="#e2e2e2"/></svg></div>
<div class="sp" style="left:480px;top:242px;width:57px;height:26px;background:#c8dce6;border-color:#8a9ca5"><div class="t" style="left:3px;top:4.7px;font-size:14px;line-height:14px;color:#111">5</div><svg width="8" height="5" style="position:absolute;left:41px;top:5px"><path d="M0 4.5 L3 0.5 L5 0.5 L8 4.5 Z" fill="#000"/></svg><svg width="8" height="5" style="position:absolute;left:41px;top:16.8px"><path d="M0 0 L8 0 L5 4 L3 4 Z" fill="#000"/></svg></div>
<div class="cb" style="left:544.5px;top:243.5px;width:17px;height:17px;"></div>
<div class="sp" style="left:576px;top:242px;width:47.5px;height:26px;background:#6b7378;border-color:#5e666a"><svg width="8" height="5" style="position:absolute;left:31.5px;top:5px"><path d="M0 4.5 L3 0.5 L5 0.5 L8 4.5 Z" fill="#2c2c2c"/></svg><svg width="8" height="5" style="position:absolute;left:31.5px;top:16.8px"><path d="M0 0 L8 0 L5 4 L3 4 Z" fill="#2c2c2c"/></svg></div>
<div class="sp" style="left:631px;top:242px;width:57.5px;height:26px;background:#c8dce6;border-color:#8a9ca5"><div class="t" style="left:3px;top:4.7px;font-size:14px;line-height:14px;color:#111">1</div><svg width="8" height="5" style="position:absolute;left:41.5px;top:5px"><path d="M0 4.5 L3 0.5 L5 0.5 L8 4.5 Z" fill="#000"/></svg><svg width="8" height="5" style="position:absolute;left:41.5px;top:16.8px"><path d="M0 0 L8 0 L5 4 L3 4 Z" fill="#000"/></svg></div>
<div class="sp" style="left:697.5px;top:242px;width:55px;height:26px;background:#c8dce6;border-color:#8a9ca5"><div class="t" style="left:3px;top:4.7px;font-size:14px;line-height:14px;color:#111">0</div><svg width="8" height="5" style="position:absolute;left:39px;top:5px"><path d="M0 4.5 L3 0.5 L5 0.5 L8 4.5 Z" fill="#000"/></svg><svg width="8" height="5" style="position:absolute;left:39px;top:16.8px"><path d="M0 0 L8 0 L5 4 L3 4 Z" fill="#000"/></svg></div>
<div class="sp" style="left:761.5px;top:242px;width:40px;height:26px;background:#c8dce6;border-color:#8a9ca5;box-sizing:content-box;"><div class="t" style="left:3px;top:4.3px;font-size:14px;line-height:14px;color:#111;white-space:pre">0</div></div>
<div class="bt" style="left:813px;top:242px;width:158px;height:26px;"><div class="dt" style="left:73.0px;top:11.4px"></div><div class="dt" style="left:78.0px;top:11.4px"></div><div class="dt" style="left:83.0px;top:11.4px"></div></div>
<div class="t" style="left:-168.5px;width:400px;text-align:center;top:272.54px;font-size:15.5px;line-height:15.5px;color:#e6e6e6;">8</div>
<div class="cb" style="left:45px;top:270.5px;width:18px;height:18px;"><svg width="20" height="22" viewBox="0 0 20 22" style="position:absolute;left:0;top:-2px"><path d="M1 12.3 L3.8 10.9 L7.4 14.8 L14.8 1.3 L17.8 1.3 L8.2 18.5 L6.2 18.5 Z" fill="url(#cg)"/></svg></div>
<div class="cb" style="left:69.5px;top:270.5px;width:18px;height:18px;"><svg width="20" height="22" viewBox="0 0 20 22" style="position:absolute;left:0;top:-2px"><path d="M1 12.3 L3.8 10.9 L7.4 14.8 L14.8 1.3 L17.8 1.3 L8.2 18.5 L6.2 18.5 Z" fill="url(#cg)"/></svg></div>
<div class="cb" style="left:94px;top:270.5px;width:18px;height:18px;"></div>
<div class="cb" style="left:118.5px;top:270.5px;width:18px;height:18px;"></div>
<div class="cb" style="left:143px;top:270.5px;width:18px;height:18px;"></div>
<div class="sp" style="left:173px;top:272px;width:48px;height:26px;background:#c8dce6;border-color:#8a9ca5"><div class="t" style="left:3px;top:4.7px;font-size:14px;line-height:14px;color:#111">8</div><svg width="8" height="5" style="position:absolute;left:32px;top:5px"><path d="M0 4.5 L3 0.5 L5 0.5 L8 4.5 Z" fill="#000"/></svg><svg width="8" height="5" style="position:absolute;left:32px;top:16.8px"><path d="M0 0 L8 0 L5 4 L3 4 Z" fill="#000"/></svg></div>
<div class="bt" style="left:235px;top:272px;width:87px;height:26px;"><div class="dt" style="left:37.5px;top:11.4px"></div><div class="dt" style="left:42.5px;top:11.4px"></div><div class="dt" style="left:47.5px;top:11.4px"></div></div>
<div class="sp" style="left:337px;top:272px;width:48px;height:26px;background:#c8dce6;border-color:#8a9ca5"><div class="t" style="left:3px;top:4.7px;font-size:14px;line-height:14px;color:#111">11</div><svg width="8" height="5" style="position:absolute;left:32px;top:5px"><path d="M0 4.5 L3 0.5 L5 0.5 L8 4.5 Z" fill="#000"/></svg><svg width="8" height="5" style="position:absolute;left:32px;top:16.8px"><path d="M0 0 L8 0 L5 4 L3 4 Z" fill="#000"/></svg></div>
<div class="cm" style="left:392px;top:272px;width:79px;height:26px;"><div class="t" style="left:5px;top:4.3px;font-size:14px;line-height:14px;color:#d2d2d2">Dial</div><svg width="11" height="6" style="position:absolute;left:63px;top:10px"><path d="M0 0 L11 0 L6.5 5.5 L4.5 5.5 Z" fill="#e2e2e2"/></svg></div>
<div class="sp" style="left:480px;top:272px;width:57px;height:26px;background:#c8dce6;border-color:#8a9ca5"><div class="t" style="left:3px;top:4.7px;font-size:14px;line-height:14px;color:#111">10</div><svg width="8" height="5" style="position:absolute;left:41px;top:5px"><path d="M0 4.5 L3 0.5 L5 0.5 L8 4.5 Z" fill="#000"/></svg><svg width="8" height="5" style="position:absolute;left:41px;top:16.8px"><path d="M0 0 L8 0 L5 4 L3 4 Z" fill="#000"/></svg></div>
<div class="cb" style="left:544.5px;top:273.5px;width:17px;height:17px;"></div>
<div class="sp" style="left:576px;top:272px;width:47.5px;height:26px;background:#6b7378;border-color:#5e666a"><svg width="8" height="5" style="position:absolute;left:31.5px;top:5px"><path d="M0 4.5 L3 0.5 L5 0.5 L8 4.5 Z" fill="#2c2c2c"/></svg><svg width="8" height="5" style="position:absolute;left:31.5px;top:16.8px"><path d="M0 0 L8 0 L5 4 L3 4 Z" fill="#2c2c2c"/></svg></div>
<div class="sp" style="left:631px;top:272px;width:57.5px;height:26px;background:#c8dce6;border-color:#8a9ca5"><div class="t" style="left:3px;top:4.7px;font-size:14px;line-height:14px;color:#111">10</div><svg width="8" height="5" style="position:absolute;left:41.5px;top:5px"><path d="M0 4.5 L3 0.5 L5 0.5 L8 4.5 Z" fill="#000"/></svg><svg width="8" height="5" style="position:absolute;left:41.5px;top:16.8px"><path d="M0 0 L8 0 L5 4 L3 4 Z" fill="#000"/></svg></div>
<div class="sp" style="left:697.5px;top:272px;width:55px;height:26px;background:#c8dce6;border-color:#8a9ca5"><div class="t" style="left:3px;top:4.7px;font-size:14px;line-height:14px;color:#111">0</div><svg width="8" height="5" style="position:absolute;left:39px;top:5px"><path d="M0 4.5 L3 0.5 L5 0.5 L8 4.5 Z" fill="#000"/></svg><svg width="8" height="5" style="position:absolute;left:39px;top:16.8px"><path d="M0 0 L8 0 L5 4 L3 4 Z" fill="#000"/></svg></div>
<div class="sp" style="left:761.5px;top:272px;width:40px;height:26px;background:#c8dce6;border-color:#8a9ca5;box-sizing:content-box;"><div class="t" style="left:3px;top:4.3px;font-size:14px;line-height:14px;color:#111;white-space:pre">0</div></div>
<div class="bt" style="left:813px;top:272px;width:158px;height:26px;"><div class="dt" style="left:73.0px;top:11.4px"></div><div class="dt" style="left:78.0px;top:11.4px"></div><div class="dt" style="left:83.0px;top:11.4px"></div></div>
<div class="t" style="left:-117px;width:400px;text-align:center;top:332.28px;font-size:14px;line-height:14px;color:#e6e6e6;">ACn</div>
<div class="t" style="left:-89px;width:400px;text-align:center;top:332.28px;font-size:14px;line-height:14px;color:#e6e6e6;">ACl</div>
<div class="t" style="left:-57px;width:400px;text-align:center;top:332.28px;font-size:14px;line-height:14px;color:#e6e6e6;">R</div>
<div class="t" style="left:-26px;width:400px;text-align:center;top:332.28px;font-size:14px;line-height:14px;color:#e6e6e6;">Dir</div>
<div class="t" style="left:7px;width:400px;text-align:center;top:332.28px;font-size:14px;line-height:14px;color:#e6e6e6;">Ext</div>
<div class="t" style="left:38.5px;width:400px;text-align:center;top:332.28px;font-size:14px;line-height:14px;color:#e6e6e6;">Eq</div>
<div class="t" style="left:84.5px;width:400px;text-align:center;top:333.83px;font-size:13.7px;line-height:13.7px;color:#e6e6e6;">Eq N</div>
<div class="t" style="left:171px;width:400px;text-align:center;top:333.86px;font-size:13.5px;line-height:13.5px;color:#e6e6e6;">Trimmer</div>
<div class="t" style="left:283px;width:400px;text-align:center;top:333.83px;font-size:13.7px;line-height:13.7px;color:#e6e6e6;">Input</div>
<div class="cb" style="left:14px;top:355px;width:18px;height:18px;"><svg width="20" height="22" viewBox="0 0 20 22" style="position:absolute;left:0;top:-2px"><path d="M1 12.3 L3.8 10.9 L7.4 14.8 L14.8 1.3 L17.8 1.3 L8.2 18.5 L6.2 18.5 Z" fill="url(#cg)"/></svg></div>
<div class="t" style="left:-152px;width:400px;text-align:center;top:354.12px;font-size:15px;line-height:15px;color:#e6e6e6;">1</div>
<div class="cb" style="left:70.5px;top:355px;width:18px;height:18px;"><svg width="20" height="22" viewBox="0 0 20 22" style="position:absolute;left:0;top:-2px"><path d="M1 12.3 L3.8 10.9 L7.4 14.8 L14.8 1.3 L17.8 1.3 L8.2 18.5 L6.2 18.5 Z" fill="url(#cg)"/></svg></div>
<div class="cb" style="left:101.5px;top:355px;width:18px;height:18px;"><svg width="20" height="22" viewBox="0 0 20 22" style="position:absolute;left:0;top:-2px"><path d="M1 12.3 L3.8 10.9 L7.4 14.8 L14.8 1.3 L17.8 1.3 L8.2 18.5 L6.2 18.5 Z" fill="url(#cg)"/></svg></div>
<div class="cb" style="left:132px;top:355px;width:18px;height:18px;"><svg width="20" height="22" viewBox="0 0 20 22" style="position:absolute;left:0;top:-2px"><path d="M1 12.3 L3.8 10.9 L7.4 14.8 L14.8 1.3 L17.8 1.3 L8.2 18.5 L6.2 18.5 Z" fill="url(#cg)"/></svg></div>
<div class="cb" style="left:163px;top:355px;width:18px;height:18px;"></div>
<div class="cb" style="left:194px;top:355px;width:18px;height:18px;"></div>
<div class="cb" style="left:229px;top:355px;width:18px;height:18px;"></div>
<div class="cm" style="left:260px;top:354px;width:48px;height:26px;"><div class="t" style="left:5px;top:6.0px;font-size:14px;line-height:14px;color:#d2d2d2">---</div><svg width="11" height="6" style="position:absolute;left:32px;top:10px"><path d="M0 0 L11 0 L6.5 5.5 L4.5 5.5 Z" fill="#e2e2e2"/></svg></div>
<div class="sp" style="left:323px;top:354px;width:90.5px;height:26px;background:#fbfbd0;border-color:#8e8e7c;box-sizing:content-box;border-top:2px solid #0b5f9c;border-left:3px solid #0b5f9c;height:25px;width:88.5px"><div class="t" style="left:6px;top:6.1px;font-size:14px;line-height:14px;color:#111;white-space:pre">+<span style="margin-left:14px">M2</span><span style="margin-left:7px">L:3</span></div></div>
<div class="cm" style="left:428px;top:354px;width:96.5px;height:26px;"><div class="t" style="left:5px;top:4.1px;font-size:14px;line-height:14px;color:#d2d2d2">V_MaRS</div><svg width="11" height="6" style="position:absolute;left:80.5px;top:10px"><path d="M0 0 L11 0 L6.5 5.5 L4.5 5.5 Z" fill="#e2e2e2"/></svg></div>
<div class="sp" style="left:540px;top:354px;width:44px;height:26px;background:#c8dce6;border-color:#8a9ca5"><svg width="8" height="5" style="position:absolute;left:28px;top:5px"><path d="M0 4.5 L3 0.5 L5 0.5 L8 4.5 Z" fill="#000"/></svg><svg width="8" height="5" style="position:absolute;left:28px;top:16.8px"><path d="M0 0 L8 0 L5 4 L3 4 Z" fill="#000"/></svg></div>
<div class="sp" style="left:591px;top:354px;width:40px;height:26px;background:#c8dce6;border-color:#8a9ca5;box-sizing:content-box;"><div class="t" style="left:3px;top:5.0px;font-size:14px;line-height:14px;color:#111;white-space:pre"></div></div>
<div class="sp" style="left:644px;top:354px;width:41px;height:26px;background:#c8dce6;border-color:#8a9ca5"><svg width="8" height="5" style="position:absolute;left:25px;top:5px"><path d="M0 4.5 L3 0.5 L5 0.5 L8 4.5 Z" fill="#000"/></svg><svg width="8" height="5" style="position:absolute;left:25px;top:16.8px"><path d="M0 0 L8 0 L5 4 L3 4 Z" fill="#000"/></svg></div>
<div class="sp" style="left:696.5px;top:354px;width:52.5px;height:26px;background:#c8dce6;border-color:#8a9ca5"><svg width="8" height="5" style="position:absolute;left:36.5px;top:5px"><path d="M0 4.5 L3 0.5 L5 0.5 L8 4.5 Z" fill="#000"/></svg><svg width="8" height="5" style="position:absolute;left:36.5px;top:16.8px"><path d="M0 0 L8 0 L5 4 L3 4 Z" fill="#000"/></svg></div>
<div class="sp" style="left:763px;top:354px;width:35.5px;height:26px;background:#c8dce6;border-color:#8a9ca5;box-sizing:content-box;"><div class="t" style="left:3px;top:5.0px;font-size:14px;line-height:14px;color:#111;white-space:pre"></div></div>
<div class="sp" style="left:805px;top:354px;width:36px;height:26px;background:#c8dce6;border-color:#8a9ca5;box-sizing:content-box;"><div class="t" style="left:3px;top:5.0px;font-size:14px;line-height:14px;color:#111;white-space:pre"></div></div>
<div class="sp" style="left:856.5px;top:354px;width:46.5px;height:26px;background:#c8dce6;border-color:#8a9ca5;box-sizing:content-box;"><div class="t" style="left:3px;top:5.0px;font-size:14px;line-height:14px;color:#111;white-space:pre"></div></div>
<div class="cb" style="left:14px;top:384px;width:18px;height:18px;"><svg width="20" height="22" viewBox="0 0 20 22" style="position:absolute;left:0;top:-2px"><path d="M1 12.3 L3.8 10.9 L7.4 14.8 L14.8 1.3 L17.8 1.3 L8.2 18.5 L6.2 18.5 Z" fill="url(#cg)"/></svg></div>
<div class="t" style="left:-152px;width:400px;text-align:center;top:383.12px;font-size:15px;line-height:15px;color:#e6e6e6;">2</div>
<div class="cb" style="left:70.5px;top:384px;width:18px;height:18px;"><svg width="20" height="22" viewBox="0 0 20 22" style="position:absolute;left:0;top:-2px"><path d="M1 12.3 L3.8 10.9 L7.4 14.8 L14.8 1.3 L17.8 1.3 L8.2 18.5 L6.2 18.5 Z" fill="url(#cg)"/></svg></div>
<div class="cb" style="left:101.5px;top:384px;width:18px;height:18px;"><svg width="20" height="22" viewBox="0 0 20 22" style="position:absolute;left:0;top:-2px"><path d="M1 12.3 L3.8 10.9 L7.4 14.8 L14.8 1.3 L17.8 1.3 L8.2 18.5 L6.2 18.5 Z" fill="url(#cg)"/></svg></div>
<div class="cb" style="left:132px;top:384px;width:18px;height:18px;"></div>
<div class="cb" style="left:163px;top:384px;width:18px;height:18px;"></div>
<div class="cb" style="left:194px;top:384px;width:18px;height:18px;"></div>
<div class="cb" style="left:229px;top:384px;width:18px;height:18px;"></div>
<div class="cm" style="left:260px;top:383px;width:48px;height:26px;"><div class="t" style="left:5px;top:6.0px;font-size:14px;line-height:14px;color:#d2d2d2">---</div><svg width="11" height="6" style="position:absolute;left:32px;top:10px"><path d="M0 0 L11 0 L6.5 5.5 L4.5 5.5 Z" fill="#e2e2e2"/></svg></div>
<div class="sp" style="left:323.5px;top:383px;width:89px;height:26px;background:#fbfbd0;border-color:#8e8e7c;box-sizing:content-box;"><div class="t" style="left:6px;top:5.8px;font-size:14px;line-height:14px;color:#111;white-space:pre">+<span style="margin-left:14px">M2</span><span style="margin-left:7px">L:4</span></div></div>
<div class="cm" style="left:428px;top:383px;width:96.5px;height:26px;"><div class="t" style="left:5px;top:4.1px;font-size:14px;line-height:14px;color:#d2d2d2">V_MaRS</div><svg width="11" height="6" style="position:absolute;left:80.5px;top:10px"><path d="M0 0 L11 0 L6.5 5.5 L4.5 5.5 Z" fill="#e2e2e2"/></svg></div>
<div class="sp" style="left:540px;top:383px;width:44px;height:26px;background:#c8dce6;border-color:#8a9ca5"><svg width="8" height="5" style="position:absolute;left:28px;top:5px"><path d="M0 4.5 L3 0.5 L5 0.5 L8 4.5 Z" fill="#000"/></svg><svg width="8" height="5" style="position:absolute;left:28px;top:16.8px"><path d="M0 0 L8 0 L5 4 L3 4 Z" fill="#000"/></svg></div>
<div class="sp" style="left:591px;top:383px;width:40px;height:26px;background:#c8dce6;border-color:#8a9ca5;box-sizing:content-box;"><div class="t" style="left:3px;top:5.0px;font-size:14px;line-height:14px;color:#111;white-space:pre"></div></div>
<div class="sp" style="left:644px;top:383px;width:41px;height:26px;background:#c8dce6;border-color:#8a9ca5"><svg width="8" height="5" style="position:absolute;left:25px;top:5px"><path d="M0 4.5 L3 0.5 L5 0.5 L8 4.5 Z" fill="#000"/></svg><svg width="8" height="5" style="position:absolute;left:25px;top:16.8px"><path d="M0 0 L8 0 L5 4 L3 4 Z" fill="#000"/></svg></div>
<div class="sp" style="left:696.5px;top:383px;width:52.5px;height:26px;background:#c8dce6;border-color:#8a9ca5"><svg width="8" height="5" style="position:absolute;left:36.5px;top:5px"><path d="M0 4.5 L3 0.5 L5 0.5 L8 4.5 Z" fill="#000"/></svg><svg width="8" height="5" style="position:absolute;left:36.5px;top:16.8px"><path d="M0 0 L8 0 L5 4 L3 4 Z" fill="#000"/></svg></div>
<div class="sp" style="left:763px;top:383px;width:35.5px;height:26px;background:#c8dce6;border-color:#8a9ca5;box-sizing:content-box;"><div class="t" style="left:3px;top:5.0px;font-size:14px;line-height:14px;color:#111;white-space:pre"></div></div>
<div class="sp" style="left:805px;top:383px;width:36px;height:26px;background:#c8dce6;border-color:#8a9ca5;box-sizing:content-box;"><div class="t" style="left:3px;top:5.0px;font-size:14px;line-height:14px;color:#111;white-space:pre"></div></div>
<div class="sp" style="left:856.5px;top:383px;width:46.5px;height:26px;background:#c8dce6;border-color:#8a9ca5;box-sizing:content-box;"><div class="t" style="left:3px;top:5.0px;font-size:14px;line-height:14px;color:#111;white-space:pre"></div></div>
<div class="cb" style="left:14px;top:414px;width:18px;height:18px;"><svg width="20" height="22" viewBox="0 0 20 22" style="position:absolute;left:0;top:-2px"><path d="M1 12.3 L3.8 10.9 L7.4 14.8 L14.8 1.3 L17.8 1.3 L8.2 18.5 L6.2 18.5 Z" fill="url(#cg)"/></svg></div>
<div class="t" style="left:-152px;width:400px;text-align:center;top:413.12px;font-size:15px;line-height:15px;color:#e6e6e6;">3</div>
<div class="cb" style="left:70.5px;top:414px;width:18px;height:18px;"><svg width="20" height="22" viewBox="0 0 20 22" style="position:absolute;left:0;top:-2px"><path d="M1 12.3 L3.8 10.9 L7.4 14.8 L14.8 1.3 L17.8 1.3 L8.2 18.5 L6.2 18.5 Z" fill="url(#cg)"/></svg></div>
<div class="cb" style="left:101.5px;top:414px;width:18px;height:18px;"><svg width="20" height="22" viewBox="0 0 20 22" style="position:absolute;left:0;top:-2px"><path d="M1 12.3 L3.8 10.9 L7.4 14.8 L14.8 1.3 L17.8 1.3 L8.2 18.5 L6.2 18.5 Z" fill="url(#cg)"/></svg></div>
<div class="cb" style="left:132px;top:414px;width:18px;height:18px;"></div>
<div class="cb" style="left:163px;top:414px;width:18px;height:18px;"></div>
<div class="cb" style="left:194px;top:414px;width:18px;height:18px;"></div>
<div class="cb" style="left:229px;top:414px;width:18px;height:18px;"><svg width="20" height="22" viewBox="0 0 20 22" style="position:absolute;left:0;top:-2px"><path d="M1 12.3 L3.8 10.9 L7.4 14.8 L14.8 1.3 L17.8 1.3 L8.2 18.5 L6.2 18.5 Z" fill="url(#cg)"/></svg></div>
<div class="cm" style="left:260px;top:413px;width:48px;height:26px;"><div class="t" style="left:5px;top:6.0px;font-size:14px;line-height:14px;color:#d2d2d2">---</div><svg width="11" height="6" style="position:absolute;left:32px;top:10px"><path d="M0 0 L11 0 L6.5 5.5 L4.5 5.5 Z" fill="#e2e2e2"/></svg></div>
<div class="bt" style="left:323.5px;top:413px;width:90px;height:26px;"><div class="dt" style="left:39.0px;top:11.4px"></div><div class="dt" style="left:44.0px;top:11.4px"></div><div class="dt" style="left:49.0px;top:11.4px"></div></div>
<div class="cm" style="left:428px;top:413px;width:96.5px;height:26px;"><div class="t" style="left:5px;top:4.1px;font-size:14px;line-height:14px;color:#d2d2d2">Virtual</div><svg width="11" height="6" style="position:absolute;left:80.5px;top:10px"><path d="M0 0 L11 0 L6.5 5.5 L4.5 5.5 Z" fill="#e2e2e2"/></svg></div>
<div class="sp" style="left:540px;top:413px;width:44px;height:26px;background:#c8dce6;border-color:#8a9ca5"><svg width="8" height="5" style="position:absolute;left:28px;top:5px"><path d="M0 4.5 L3 0.5 L5 0.5 L8 4.5 Z" fill="#000"/></svg><svg width="8" height="5" style="position:absolute;left:28px;top:16.8px"><path d="M0 0 L8 0 L5 4 L3 4 Z" fill="#000"/></svg></div>
<div class="sp" style="left:591px;top:413px;width:40px;height:26px;background:#c8dce6;border-color:#8a9ca5;box-sizing:content-box;"><div class="t" style="left:3px;top:5.0px;font-size:14px;line-height:14px;color:#111;white-space:pre"></div></div>
<div class="sp" style="left:644px;top:413px;width:41px;height:26px;background:#c8dce6;border-color:#8a9ca5"><svg width="8" height="5" style="position:absolute;left:25px;top:5px"><path d="M0 4.5 L3 0.5 L5 0.5 L8 4.5 Z" fill="#000"/></svg><svg width="8" height="5" style="position:absolute;left:25px;top:16.8px"><path d="M0 0 L8 0 L5 4 L3 4 Z" fill="#000"/></svg></div>
<div class="sp" style="left:696.5px;top:413px;width:52.5px;height:26px;background:#c8dce6;border-color:#8a9ca5"><svg width="8" height="5" style="position:absolute;left:36.5px;top:5px"><path d="M0 4.5 L3 0.5 L5 0.5 L8 4.5 Z" fill="#000"/></svg><svg width="8" height="5" style="position:absolute;left:36.5px;top:16.8px"><path d="M0 0 L8 0 L5 4 L3 4 Z" fill="#000"/></svg></div>
<div class="sp" style="left:763px;top:413px;width:35.5px;height:26px;background:#c8dce6;border-color:#8a9ca5;box-sizing:content-box;"><div class="t" style="left:3px;top:5.0px;font-size:14px;line-height:14px;color:#111;white-space:pre"></div></div>
<div class="sp" style="left:805px;top:413px;width:36px;height:26px;background:#c8dce6;border-color:#8a9ca5;box-sizing:content-box;"><div class="t" style="left:3px;top:5.0px;font-size:14px;line-height:14px;color:#111;white-space:pre"></div></div>
<div class="sp" style="left:856.5px;top:413px;width:46.5px;height:26px;background:#c8dce6;border-color:#8a9ca5;box-sizing:content-box;"><div class="t" style="left:3px;top:5.0px;font-size:14px;line-height:14px;color:#111;white-space:pre"></div></div>
<div class="cb" style="left:14px;top:443px;width:18px;height:18px;"><svg width="20" height="22" viewBox="0 0 20 22" style="position:absolute;left:0;top:-2px"><path d="M1 12.3 L3.8 10.9 L7.4 14.8 L14.8 1.3 L17.8 1.3 L8.2 18.5 L6.2 18.5 Z" fill="url(#cg)"/></svg></div>
<div class="t" style="left:-152px;width:400px;text-align:center;top:442.12px;font-size:15px;line-height:15px;color:#e6e6e6;">4</div>
<div class="cb" style="left:70.5px;top:443px;width:18px;height:18px;"><svg width="20" height="22" viewBox="0 0 20 22" style="position:absolute;left:0;top:-2px"><path d="M1 12.3 L3.8 10.9 L7.4 14.8 L14.8 1.3 L17.8 1.3 L8.2 18.5 L6.2 18.5 Z" fill="url(#cg)"/></svg></div>
<div class="cb" style="left:101.5px;top:443px;width:18px;height:18px;"><svg width="20" height="22" viewBox="0 0 20 22" style="position:absolute;left:0;top:-2px"><path d="M1 12.3 L3.8 10.9 L7.4 14.8 L14.8 1.3 L17.8 1.3 L8.2 18.5 L6.2 18.5 Z" fill="url(#cg)"/></svg></div>
<div class="cb" style="left:132px;top:443px;width:18px;height:18px;"><svg width="20" height="22" viewBox="0 0 20 22" style="position:absolute;left:0;top:-2px"><path d="M1 12.3 L3.8 10.9 L7.4 14.8 L14.8 1.3 L17.8 1.3 L8.2 18.5 L6.2 18.5 Z" fill="url(#cg)"/></svg></div>
<div class="cb" style="left:163px;top:443px;width:18px;height:18px;"></div>
<div class="cb" style="left:194px;top:443px;width:18px;height:18px;"></div>
<div class="cb" style="left:229px;top:443px;width:18px;height:18px;"><svg width="20" height="22" viewBox="0 0 20 22" style="position:absolute;left:0;top:-2px"><path d="M1 12.3 L3.8 10.9 L7.4 14.8 L14.8 1.3 L17.8 1.3 L8.2 18.5 L6.2 18.5 Z" fill="url(#cg)"/></svg></div>
<div class="cm" style="left:260px;top:442px;width:48px;height:26px;"><div class="t" style="left:5px;top:6.0px;font-size:14px;line-height:14px;color:#d2d2d2">---</div><svg width="11" height="6" style="position:absolute;left:32px;top:10px"><path d="M0 0 L11 0 L6.5 5.5 L4.5 5.5 Z" fill="#e2e2e2"/></svg></div>
<div class="bt" style="left:323.5px;top:442px;width:90px;height:26px;"><div class="dt" style="left:39.0px;top:11.4px"></div><div class="dt" style="left:44.0px;top:11.4px"></div><div class="dt" style="left:49.0px;top:11.4px"></div></div>
<div class="cm" style="left:428px;top:442px;width:96.5px;height:26px;"><div class="t" style="left:5px;top:4.1px;font-size:14px;line-height:14px;color:#d2d2d2">Virtual</div><svg width="11" height="6" style="position:absolute;left:80.5px;top:10px"><path d="M0 0 L11 0 L6.5 5.5 L4.5 5.5 Z" fill="#e2e2e2"/></svg></div>
<div class="sp" style="left:540px;top:442px;width:44px;height:26px;background:#c8dce6;border-color:#8a9ca5"><svg width="8" height="5" style="position:absolute;left:28px;top:5px"><path d="M0 4.5 L3 0.5 L5 0.5 L8 4.5 Z" fill="#000"/></svg><svg width="8" height="5" style="position:absolute;left:28px;top:16.8px"><path d="M0 0 L8 0 L5 4 L3 4 Z" fill="#000"/></svg></div>
<div class="sp" style="left:591px;top:442px;width:40px;height:26px;background:#c8dce6;border-color:#8a9ca5;box-sizing:content-box;"><div class="t" style="left:3px;top:5.0px;font-size:14px;line-height:14px;color:#111;white-space:pre"></div></div>
<div class="sp" style="left:644px;top:442px;width:41px;height:26px;background:#c8dce6;border-color:#8a9ca5"><svg width="8" height="5" style="position:absolute;left:25px;top:5px"><path d="M0 4.5 L3 0.5 L5 0.5 L8 4.5 Z" fill="#000"/></svg><svg width="8" height="5" style="position:absolute;left:25px;top:16.8px"><path d="M0 0 L8 0 L5 4 L3 4 Z" fill="#000"/></svg></div>
<div class="sp" style="left:696.5px;top:442px;width:52.5px;height:26px;background:#c8dce6;border-color:#8a9ca5"><svg width="8" height="5" style="position:absolute;left:36.5px;top:5px"><path d="M0 4.5 L3 0.5 L5 0.5 L8 4.5 Z" fill="#000"/></svg><svg width="8" height="5" style="position:absolute;left:36.5px;top:16.8px"><path d="M0 0 L8 0 L5 4 L3 4 Z" fill="#000"/></svg></div>
<div class="sp" style="left:763px;top:442px;width:35.5px;height:26px;background:#c8dce6;border-color:#8a9ca5;box-sizing:content-box;"><div class="t" style="left:3px;top:5.0px;font-size:14px;line-height:14px;color:#111;white-space:pre"></div></div>
<div class="sp" style="left:805px;top:442px;width:36px;height:26px;background:#c8dce6;border-color:#8a9ca5;box-sizing:content-box;"><div class="t" style="left:3px;top:5.0px;font-size:14px;line-height:14px;color:#111;white-space:pre"></div></div>
<div class="sp" style="left:856.5px;top:442px;width:46.5px;height:26px;background:#c8dce6;border-color:#8a9ca5;box-sizing:content-box;"><div class="t" style="left:3px;top:5.0px;font-size:14px;line-height:14px;color:#111;white-space:pre"></div></div>
<div class="cb" style="left:14px;top:473px;width:18px;height:18px;"><svg width="20" height="22" viewBox="0 0 20 22" style="position:absolute;left:0;top:-2px"><path d="M1 12.3 L3.8 10.9 L7.4 14.8 L14.8 1.3 L17.8 1.3 L8.2 18.5 L6.2 18.5 Z" fill="url(#cg)"/></svg></div>
<div class="t" style="left:-152px;width:400px;text-align:center;top:472.12px;font-size:15px;line-height:15px;color:#e6e6e6;">5</div>
<div class="cb" style="left:70.5px;top:473px;width:18px;height:18px;"><svg width="20" height="22" viewBox="0 0 20 22" style="position:absolute;left:0;top:-2px"><path d="M1 12.3 L3.8 10.9 L7.4 14.8 L14.8 1.3 L17.8 1.3 L8.2 18.5 L6.2 18.5 Z" fill="url(#cg)"/></svg></div>
<div class="cb" style="left:101.5px;top:473px;width:18px;height:18px;"><svg width="20" height="22" viewBox="0 0 20 22" style="position:absolute;left:0;top:-2px"><path d="M1 12.3 L3.8 10.9 L7.4 14.8 L14.8 1.3 L17.8 1.3 L8.2 18.5 L6.2 18.5 Z" fill="url(#cg)"/></svg></div>
<div class="cb" style="left:132px;top:473px;width:18px;height:18px;"></div>
<div class="cb" style="left:163px;top:473px;width:18px;height:18px;"></div>
<div class="cb" style="left:194px;top:473px;width:18px;height:18px;"></div>
<div class="cb" style="left:229px;top:473px;width:18px;height:18px;"></div>
<div class="cm" style="left:260px;top:472px;width:48px;height:26px;"><div class="t" style="left:5px;top:6.0px;font-size:14px;line-height:14px;color:#d2d2d2">---</div><svg width="11" height="6" style="position:absolute;left:32px;top:10px"><path d="M0 0 L11 0 L6.5 5.5 L4.5 5.5 Z" fill="#e2e2e2"/></svg></div>
<div class="bt" style="left:323.5px;top:472px;width:90px;height:26px;"><div class="dt" style="left:39.0px;top:11.4px"></div><div class="dt" style="left:44.0px;top:11.4px"></div><div class="dt" style="left:49.0px;top:11.4px"></div></div>
<div class="cm" style="left:428px;top:472px;width:96.5px;height:26px;"><div class="t" style="left:5px;top:4.1px;font-size:14px;line-height:14px;color:#d2d2d2">Virtual</div><svg width="11" height="6" style="position:absolute;left:80.5px;top:10px"><path d="M0 0 L11 0 L6.5 5.5 L4.5 5.5 Z" fill="#e2e2e2"/></svg></div>
<div class="sp" style="left:540px;top:472px;width:44px;height:26px;background:#c8dce6;border-color:#8a9ca5"><div class="t" style="left:3px;top:5.4px;font-size:14px;line-height:14px;color:#111">7</div><svg width="8" height="5" style="position:absolute;left:28px;top:5px"><path d="M0 4.5 L3 0.5 L5 0.5 L8 4.5 Z" fill="#000"/></svg><svg width="8" height="5" style="position:absolute;left:28px;top:16.8px"><path d="M0 0 L8 0 L5 4 L3 4 Z" fill="#000"/></svg></div>
<div class="sp" style="left:591px;top:472px;width:40px;height:26px;background:#c8dce6;border-color:#8a9ca5;box-sizing:content-box;"><div class="t" style="left:3px;top:5.0px;font-size:14px;line-height:14px;color:#111;white-space:pre">200</div></div>
<div class="sp" style="left:644px;top:472px;width:41px;height:26px;background:#c8dce6;border-color:#8a9ca5"><div class="t" style="left:3px;top:5.4px;font-size:14px;line-height:14px;color:#111">2</div><svg width="8" height="5" style="position:absolute;left:25px;top:5px"><path d="M0 4.5 L3 0.5 L5 0.5 L8 4.5 Z" fill="#000"/></svg><svg width="8" height="5" style="position:absolute;left:25px;top:16.8px"><path d="M0 0 L8 0 L5 4 L3 4 Z" fill="#000"/></svg></div>
<div class="sp" style="left:696.5px;top:472px;width:52.5px;height:26px;background:#c8dce6;border-color:#8a9ca5"><div class="t" style="left:3px;top:5.4px;font-size:14px;line-height:14px;color:#111">8</div><svg width="8" height="5" style="position:absolute;left:36.5px;top:5px"><path d="M0 4.5 L3 0.5 L5 0.5 L8 4.5 Z" fill="#000"/></svg><svg width="8" height="5" style="position:absolute;left:36.5px;top:16.8px"><path d="M0 0 L8 0 L5 4 L3 4 Z" fill="#000"/></svg></div>
<div class="sp" style="left:763px;top:472px;width:35.5px;height:26px;background:#c8dce6;border-color:#8a9ca5;box-sizing:content-box;"><div class="t" style="left:3px;top:5.0px;font-size:14px;line-height:14px;color:#111;white-space:pre">122</div></div>
<div class="sp" style="left:805px;top:472px;width:36px;height:26px;background:#c8dce6;border-color:#8a9ca5;box-sizing:content-box;"><div class="t" style="left:3px;top:5.0px;font-size:14px;line-height:14px;color:#111;white-space:pre">97</div></div>
<div class="sp" style="left:856.5px;top:472px;width:46.5px;height:26px;background:#c8dce6;border-color:#8a9ca5;box-sizing:content-box;"><div class="t" style="left:3px;top:5.0px;font-size:14px;line-height:14px;color:#111;white-space:pre">-79</div></div>
<div class="cb" style="left:14px;top:503px;width:18px;height:18px;"><svg width="20" height="22" viewBox="0 0 20 22" style="position:absolute;left:0;top:-2px"><path d="M1 12.3 L3.8 10.9 L7.4 14.8 L14.8 1.3 L17.8 1.3 L8.2 18.5 L6.2 18.5 Z" fill="url(#cg)"/></svg></div>
<div class="t" style="left:-152px;width:400px;text-align:center;top:502.12px;font-size:15px;line-height:15px;color:#e6e6e6;">6</div>
<div class="cb" style="left:70.5px;top:503px;width:18px;height:18px;"><svg width="20" height="22" viewBox="0 0 20 22" style="position:absolute;left:0;top:-2px"><path d="M1 12.3 L3.8 10.9 L7.4 14.8 L14.8 1.3 L17.8 1.3 L8.2 18.5 L6.2 18.5 Z" fill="url(#cg)"/></svg></div>
<div class="cb" style="left:101.5px;top:503px;width:18px;height:18px;"><svg width="20" height="22" viewBox="0 0 20 22" style="position:absolute;left:0;top:-2px"><path d="M1 12.3 L3.8 10.9 L7.4 14.8 L14.8 1.3 L17.8 1.3 L8.2 18.5 L6.2 18.5 Z" fill="url(#cg)"/></svg></div>
<div class="cb" style="left:132px;top:503px;width:18px;height:18px;"><svg width="20" height="22" viewBox="0 0 20 22" style="position:absolute;left:0;top:-2px"><path d="M1 12.3 L3.8 10.9 L7.4 14.8 L14.8 1.3 L17.8 1.3 L8.2 18.5 L6.2 18.5 Z" fill="url(#cg)"/></svg></div>
<div class="cb" style="left:163px;top:503px;width:18px;height:18px;"></div>
<div class="cb" style="left:194px;top:503px;width:18px;height:18px;"></div>
<div class="cb" style="left:229px;top:503px;width:18px;height:18px;"></div>
<div class="cm" style="left:260px;top:502px;width:48px;height:26px;"><div class="t" style="left:5px;top:6.0px;font-size:14px;line-height:14px;color:#d2d2d2">---</div><svg width="11" height="6" style="position:absolute;left:32px;top:10px"><path d="M0 0 L11 0 L6.5 5.5 L4.5 5.5 Z" fill="#e2e2e2"/></svg></div>
<div class="bt" style="left:323.5px;top:502px;width:90px;height:26px;"><div class="dt" style="left:39.0px;top:11.4px"></div><div class="dt" style="left:44.0px;top:11.4px"></div><div class="dt" style="left:49.0px;top:11.4px"></div></div>
<div class="cm" style="left:428px;top:502px;width:96.5px;height:26px;"><div class="t" style="left:5px;top:4.1px;font-size:14px;line-height:14px;color:#d2d2d2">Virtual</div><svg width="11" height="6" style="position:absolute;left:80.5px;top:10px"><path d="M0 0 L11 0 L6.5 5.5 L4.5 5.5 Z" fill="#e2e2e2"/></svg></div>
<div class="sp" style="left:540px;top:502px;width:44px;height:26px;background:#c8dce6;border-color:#8a9ca5"><div class="t" style="left:3px;top:5.4px;font-size:14px;line-height:14px;color:#111">7</div><svg width="8" height="5" style="position:absolute;left:28px;top:5px"><path d="M0 4.5 L3 0.5 L5 0.5 L8 4.5 Z" fill="#000"/></svg><svg width="8" height="5" style="position:absolute;left:28px;top:16.8px"><path d="M0 0 L8 0 L5 4 L3 4 Z" fill="#000"/></svg></div>
<div class="sp" style="left:591px;top:502px;width:40px;height:26px;background:#c8dce6;border-color:#8a9ca5;box-sizing:content-box;"><div class="t" style="left:3px;top:5.0px;font-size:14px;line-height:14px;color:#111;white-space:pre">200</div></div>
<div class="sp" style="left:644px;top:502px;width:41px;height:26px;background:#c8dce6;border-color:#8a9ca5"><div class="t" style="left:3px;top:5.4px;font-size:14px;line-height:14px;color:#111">2</div><svg width="8" height="5" style="position:absolute;left:25px;top:5px"><path d="M0 4.5 L3 0.5 L5 0.5 L8 4.5 Z" fill="#000"/></svg><svg width="8" height="5" style="position:absolute;left:25px;top:16.8px"><path d="M0 0 L8 0 L5 4 L3 4 Z" fill="#000"/></svg></div>
<div class="sp" style="left:696.5px;top:502px;width:52.5px;height:26px;background:#c8dce6;border-color:#8a9ca5"><div class="t" style="left:3px;top:5.4px;font-size:14px;line-height:14px;color:#111">8</div><svg width="8" height="5" style="position:absolute;left:36.5px;top:5px"><path d="M0 4.5 L3 0.5 L5 0.5 L8 4.5 Z" fill="#000"/></svg><svg width="8" height="5" style="position:absolute;left:36.5px;top:16.8px"><path d="M0 0 L8 0 L5 4 L3 4 Z" fill="#000"/></svg></div>
<div class="sp" style="left:763px;top:502px;width:35.5px;height:26px;background:#c8dce6;border-color:#8a9ca5;box-sizing:content-box;"><div class="t" style="left:3px;top:5.0px;font-size:14px;line-height:14px;color:#111;white-space:pre">87</div></div>
<div class="sp" style="left:805px;top:502px;width:36px;height:26px;background:#c8dce6;border-color:#8a9ca5;box-sizing:content-box;"><div class="t" style="left:3px;top:5.0px;font-size:14px;line-height:14px;color:#111;white-space:pre">204</div></div>
<div class="sp" style="left:856.5px;top:502px;width:46.5px;height:26px;background:#c8dce6;border-color:#8a9ca5;box-sizing:content-box;"><div class="t" style="left:3px;top:5.0px;font-size:14px;line-height:14px;color:#111;white-space:pre">42</div></div>
<div class="cb" style="left:14px;top:532px;width:18px;height:18px;"><svg width="20" height="22" viewBox="0 0 20 22" style="position:absolute;left:0;top:-2px"><path d="M1 12.3 L3.8 10.9 L7.4 14.8 L14.8 1.3 L17.8 1.3 L8.2 18.5 L6.2 18.5 Z" fill="url(#cg)"/></svg></div>
<div class="t" style="left:-152px;width:400px;text-align:center;top:531.12px;font-size:15px;line-height:15px;color:#e6e6e6;">7</div>
<div class="cb" style="left:70.5px;top:532px;width:18px;height:18px;"><svg width="20" height="22" viewBox="0 0 20 22" style="position:absolute;left:0;top:-2px"><path d="M1 12.3 L3.8 10.9 L7.4 14.8 L14.8 1.3 L17.8 1.3 L8.2 18.5 L6.2 18.5 Z" fill="url(#cg)"/></svg></div>
<div class="cb" style="left:101.5px;top:532px;width:18px;height:18px;"><svg width="20" height="22" viewBox="0 0 20 22" style="position:absolute;left:0;top:-2px"><path d="M1 12.3 L3.8 10.9 L7.4 14.8 L14.8 1.3 L17.8 1.3 L8.2 18.5 L6.2 18.5 Z" fill="url(#cg)"/></svg></div>
<div class="cb" style="left:132px;top:532px;width:18px;height:18px;"></div>
<div class="cb" style="left:163px;top:532px;width:18px;height:18px;"></div>
<div class="cb" style="left:194px;top:532px;width:18px;height:18px;"></div>
<div class="cb" style="left:229px;top:532px;width:18px;height:18px;"></div>
<div class="cm" style="left:260px;top:531px;width:48px;height:26px;"><div class="t" style="left:5px;top:6.0px;font-size:14px;line-height:14px;color:#d2d2d2">---</div><svg width="11" height="6" style="position:absolute;left:32px;top:10px"><path d="M0 0 L11 0 L6.5 5.5 L4.5 5.5 Z" fill="#e2e2e2"/></svg></div>
<div class="bt" style="left:323.5px;top:531px;width:90px;height:26px;"><div class="dt" style="left:39.0px;top:11.4px"></div><div class="dt" style="left:44.0px;top:11.4px"></div><div class="dt" style="left:49.0px;top:11.4px"></div></div>
<div class="cm" style="left:428px;top:531px;width:96.5px;height:26px;"><div class="t" style="left:5px;top:4.1px;font-size:14px;line-height:14px;color:#d2d2d2">V_MaRS</div><svg width="11" height="6" style="position:absolute;left:80.5px;top:10px"><path d="M0 0 L11 0 L6.5 5.5 L4.5 5.5 Z" fill="#e2e2e2"/></svg></div>
<div class="sp" style="left:540px;top:531px;width:44px;height:26px;background:#c8dce6;border-color:#8a9ca5"><div class="t" style="left:3px;top:5.4px;font-size:14px;line-height:14px;color:#111">6</div><svg width="8" height="5" style="position:absolute;left:28px;top:5px"><path d="M0 4.5 L3 0.5 L5 0.5 L8 4.5 Z" fill="#000"/></svg><svg width="8" height="5" style="position:absolute;left:28px;top:16.8px"><path d="M0 0 L8 0 L5 4 L3 4 Z" fill="#000"/></svg></div>
<div class="sp" style="left:591px;top:531px;width:40px;height:26px;background:#c8dce6;border-color:#8a9ca5;box-sizing:content-box;"><div class="t" style="left:3px;top:5.0px;font-size:14px;line-height:14px;color:#111;white-space:pre">200</div></div>
<div class="sp" style="left:644px;top:531px;width:41px;height:26px;background:#c8dce6;border-color:#8a9ca5"><div class="t" style="left:3px;top:5.4px;font-size:14px;line-height:14px;color:#111">1</div><svg width="8" height="5" style="position:absolute;left:25px;top:5px"><path d="M0 4.5 L3 0.5 L5 0.5 L8 4.5 Z" fill="#000"/></svg><svg width="8" height="5" style="position:absolute;left:25px;top:16.8px"><path d="M0 0 L8 0 L5 4 L3 4 Z" fill="#000"/></svg></div>
<div class="sp" style="left:696.5px;top:531px;width:52.5px;height:26px;background:#c8dce6;border-color:#8a9ca5"><div class="t" style="left:3px;top:5.4px;font-size:14px;line-height:14px;color:#111">9</div><svg width="8" height="5" style="position:absolute;left:36.5px;top:5px"><path d="M0 4.5 L3 0.5 L5 0.5 L8 4.5 Z" fill="#000"/></svg><svg width="8" height="5" style="position:absolute;left:36.5px;top:16.8px"><path d="M0 0 L8 0 L5 4 L3 4 Z" fill="#000"/></svg></div>
<div class="sp" style="left:763px;top:531px;width:35.5px;height:26px;background:#c8dce6;border-color:#8a9ca5;box-sizing:content-box;"><div class="t" style="left:3px;top:5.0px;font-size:14px;line-height:14px;color:#111;white-space:pre">167</div></div>
<div class="sp" style="left:805px;top:531px;width:36px;height:26px;background:#c8dce6;border-color:#8a9ca5;box-sizing:content-box;"><div class="t" style="left:3px;top:5.0px;font-size:14px;line-height:14px;color:#111;white-space:pre">255</div></div>
<div class="sp" style="left:856.5px;top:531px;width:46.5px;height:26px;background:#c8dce6;border-color:#8a9ca5;box-sizing:content-box;"><div class="t" style="left:3px;top:5.0px;font-size:14px;line-height:14px;color:#111;white-space:pre">-72</div></div>
<div class="cb" style="left:14px;top:562px;width:18px;height:18px;"><svg width="20" height="22" viewBox="0 0 20 22" style="position:absolute;left:0;top:-2px"><path d="M1 12.3 L3.8 10.9 L7.4 14.8 L14.8 1.3 L17.8 1.3 L8.2 18.5 L6.2 18.5 Z" fill="url(#cg)"/></svg></div>
<div class="t" style="left:-152px;width:400px;text-align:center;top:561.12px;font-size:15px;line-height:15px;color:#e6e6e6;">8</div>
<div class="cb" style="left:70.5px;top:562px;width:18px;height:18px;"><svg width="20" height="22" viewBox="0 0 20 22" style="position:absolute;left:0;top:-2px"><path d="M1 12.3 L3.8 10.9 L7.4 14.8 L14.8 1.3 L17.8 1.3 L8.2 18.5 L6.2 18.5 Z" fill="url(#cg)"/></svg></div>
<div class="cb" style="left:101.5px;top:562px;width:18px;height:18px;"><svg width="20" height="22" viewBox="0 0 20 22" style="position:absolute;left:0;top:-2px"><path d="M1 12.3 L3.8 10.9 L7.4 14.8 L14.8 1.3 L17.8 1.3 L8.2 18.5 L6.2 18.5 Z" fill="url(#cg)"/></svg></div>
<div class="cb" style="left:132px;top:562px;width:18px;height:18px;"><svg width="20" height="22" viewBox="0 0 20 22" style="position:absolute;left:0;top:-2px"><path d="M1 12.3 L3.8 10.9 L7.4 14.8 L14.8 1.3 L17.8 1.3 L8.2 18.5 L6.2 18.5 Z" fill="url(#cg)"/></svg></div>
<div class="cb" style="left:163px;top:562px;width:18px;height:18px;"></div>
<div class="cb" style="left:194px;top:562px;width:18px;height:18px;"></div>
<div class="cb" style="left:229px;top:562px;width:18px;height:18px;"></div>
<div class="cm" style="left:260px;top:561px;width:48px;height:26px;"><div class="t" style="left:5px;top:6.0px;font-size:14px;line-height:14px;color:#d2d2d2">---</div><svg width="11" height="6" style="position:absolute;left:32px;top:10px"><path d="M0 0 L11 0 L6.5 5.5 L4.5 5.5 Z" fill="#e2e2e2"/></svg></div>
<div class="bt" style="left:323.5px;top:561px;width:90px;height:26px;"><div class="dt" style="left:39.0px;top:11.4px"></div><div class="dt" style="left:44.0px;top:11.4px"></div><div class="dt" style="left:49.0px;top:11.4px"></div></div>
<div class="cm" style="left:428px;top:561px;width:96.5px;height:26px;"><div class="t" style="left:5px;top:4.1px;font-size:14px;line-height:14px;color:#d2d2d2">V_MaRS</div><svg width="11" height="6" style="position:absolute;left:80.5px;top:10px"><path d="M0 0 L11 0 L6.5 5.5 L4.5 5.5 Z" fill="#e2e2e2"/></svg></div>
<div class="sp" style="left:540px;top:561px;width:44px;height:26px;background:#c8dce6;border-color:#8a9ca5"><div class="t" style="left:3px;top:5.4px;font-size:14px;line-height:14px;color:#111">6</div><svg width="8" height="5" style="position:absolute;left:28px;top:5px"><path d="M0 4.5 L3 0.5 L5 0.5 L8 4.5 Z" fill="#000"/></svg><svg width="8" height="5" style="position:absolute;left:28px;top:16.8px"><path d="M0 0 L8 0 L5 4 L3 4 Z" fill="#000"/></svg></div>
<div class="sp" style="left:591px;top:561px;width:40px;height:26px;background:#c8dce6;border-color:#8a9ca5;box-sizing:content-box;"><div class="t" style="left:3px;top:5.0px;font-size:14px;line-height:14px;color:#111;white-space:pre">200</div></div>
<div class="sp" style="left:644px;top:561px;width:41px;height:26px;background:#c8dce6;border-color:#8a9ca5"><div class="t" style="left:3px;top:5.4px;font-size:14px;line-height:14px;color:#111">1</div><svg width="8" height="5" style="position:absolute;left:25px;top:5px"><path d="M0 4.5 L3 0.5 L5 0.5 L8 4.5 Z" fill="#000"/></svg><svg width="8" height="5" style="position:absolute;left:25px;top:16.8px"><path d="M0 0 L8 0 L5 4 L3 4 Z" fill="#000"/></svg></div>
<div class="sp" style="left:696.5px;top:561px;width:52.5px;height:26px;background:#c8dce6;border-color:#8a9ca5"><div class="t" style="left:3px;top:5.4px;font-size:14px;line-height:14px;color:#111">9</div><svg width="8" height="5" style="position:absolute;left:36.5px;top:5px"><path d="M0 4.5 L3 0.5 L5 0.5 L8 4.5 Z" fill="#000"/></svg><svg width="8" height="5" style="position:absolute;left:36.5px;top:16.8px"><path d="M0 0 L8 0 L5 4 L3 4 Z" fill="#000"/></svg></div>
<div class="sp" style="left:763px;top:561px;width:35.5px;height:26px;background:#c8dce6;border-color:#8a9ca5;box-sizing:content-box;"><div class="t" style="left:3px;top:5.0px;font-size:14px;line-height:14px;color:#111;white-space:pre">193</div></div>
<div class="sp" style="left:805px;top:561px;width:36px;height:26px;background:#c8dce6;border-color:#8a9ca5;box-sizing:content-box;"><div class="t" style="left:3px;top:5.0px;font-size:14px;line-height:14px;color:#111;white-space:pre">255</div></div>
<div class="sp" style="left:856.5px;top:561px;width:46.5px;height:26px;background:#c8dce6;border-color:#8a9ca5;box-sizing:content-box;"><div class="t" style="left:3px;top:5.0px;font-size:14px;line-height:14px;color:#111;white-space:pre">16</div></div>
<div style="position:absolute;left:545px;top:282px;width:391px;height:189px;background:#161616"></div>
<div style="position:absolute;left:550px;top:315px;width:381px;height:152px;background:#242424"></div>
<div style="position:absolute;left:891px;top:282px;width:41px;height:28px;background:#404040"></div>
<svg width="12" height="12" style="position:absolute;left:905.5px;top:290px"><path d="M2 2 L10 10 M10 2 L2 10" stroke="#e0e0e0" stroke-width="2.1" stroke-linecap="round"/></svg>
<svg width="30" height="30" style="position:absolute;left:546px;top:283px" viewBox="0 0 30 30"><defs><filter id="bl" x="-20%" y="-20%" width="140%" height="140%"><feGaussianBlur stdDeviation="0.45"/></filter></defs><g filter="url(#bl)"><rect x="8" y="4.2" width="6.3" height="4.8" rx="1" fill="#3e3e40"/><path d="M11.8 8.8 L14.6 8.8 L15.2 14 L12.4 14 Z" fill="#3a3a3c"/><path d="M7 18.4 L14 13.2 L21 18.6 L14.5 24.6 Z" fill="#252528"/><path d="M7 18.4 L14.5 24.6 L21 18.6" fill="none" stroke="#6e6e70" stroke-width="1.3"/><path d="M10.5 16.2 L14 13.2 L17.6 16" fill="none" stroke="#4a4a4e" stroke-width="1"/><path d="M14 13.5 L14.5 24" stroke="#141416" stroke-width="1"/><path d="M17 19.6 L18.6 17.8" stroke="#8a3444" stroke-width="1"/></g></svg>
<div class="t" style="left:577.5px;top:292.46px;font-size:16px;line-height:16px;color:#3aa6e8;">Trimmer</div>
<div class="t" style="left:410px;width:400px;text-align:center;top:338.16px;font-size:13.5px;line-height:13.5px;color:#d6d6d6;">Trim</div>
<div class="t" style="left:507px;width:400px;text-align:center;top:338.16px;font-size:13.5px;line-height:13.5px;color:#d6d6d6;">Mode</div>
<div class="t" style="left:600px;width:400px;text-align:center;top:338.16px;font-size:13.5px;line-height:13.5px;color:#d6d6d6;">Source</div>
<div class="t" style="left:682px;width:400px;text-align:center;top:338.16px;font-size:13.5px;line-height:13.5px;color:#d6d6d6;">AxisNN</div>
<div style="position:absolute;left:569.5px;top:356px;width:83px;height:27px;background:#505050"></div>
<div style="position:absolute;left:570.5px;top:357px;width:61px;height:25px;background:#c8dce6"></div>
<div class="t" style="left:574px;top:362.46px;font-size:16px;line-height:16px;color:#111;">+</div>
<svg width="11" height="6" style="position:absolute;left:636px;top:366px"><path d="M0 0 L11 0 L6.5 5.5 L4.5 5.5 Z" fill="#e2e2e2"/></svg>
<div style="position:absolute;left:682.5px;top:356px;width:52px;height:27px;background:#505050"></div>
<div style="position:absolute;left:683.5px;top:357px;width:30px;height:25px;background:#c8dce6"></div>
<div class="t" style="left:686px;top:362.28px;font-size:14px;line-height:14px;color:#111;">-2-</div>
<svg width="11" height="6" style="position:absolute;left:718px;top:366px"><path d="M0 0 L11 0 L6.5 5.5 L4.5 5.5 Z" fill="#e2e2e2"/></svg>
<div style="position:absolute;left:764px;top:356px;width:73px;height:27px;background:#2aa6ee"></div>
<div style="position:absolute;left:765.5px;top:357.5px;width:50px;height:24px;background:#c8dce6"></div>
<div style="position:absolute;left:815.5px;top:357.5px;width:20px;height:24px;background:#1e1e1e"></div>
<div style="position:absolute;left:768px;top:360.5px;width:29px;height:16.5px;background:#1f6fce"></div>
<div class="t" style="left:768.5px;top:361.78px;font-size:14px;line-height:14px;color:#ffffff;">L.Ax</div>
<div style="position:absolute;left:796.5px;top:361px;width:1px;height:16px;background:#e8a050"></div>
<svg width="8" height="5" style="position:absolute;left:820px;top:366px"><path d="M0 0 L8 0 L4 4.5 Z" fill="#e2e2e2"/></svg>
<div class="sp" style="left:856.5px;top:356.5px;width:50px;height:24.5px;background:#c8dce6;border-color:#8a9ca5"><div class="t" style="left:3px;top:4.0px;font-size:14px;line-height:14px;color:#111">3</div><svg width="8" height="5" style="position:absolute;left:34px;top:5px"><path d="M0 4.5 L3 0.5 L5 0.5 L8 4.5 Z" fill="#000"/></svg><svg width="8" height="5" style="position:absolute;left:34px;top:16.8px"><path d="M0 0 L8 0 L5 4 L3 4 Z" fill="#000"/></svg></div>
<div style="position:absolute;left:569px;top:408px;width:96px;height:32px;background:linear-gradient(#4c4c4c,#484848);border:1px solid #5c5c5c;box-sizing:border-box"></div>
<div class="t" style="left:417px;width:400px;text-align:center;top:416.66px;font-size:13.5px;line-height:13.5px;color:#dcdcdc;">Cancel</div>
<div style="position:absolute;left:813px;top:408px;width:96px;height:32px;background:linear-gradient(#4c4c4c,#484848);border:1px solid #5c5c5c;box-sizing:border-box"></div>
<div class="t" style="left:661px;width:400px;text-align:center;top:416.66px;font-size:13.5px;line-height:13.5px;color:#dcdcdc;">OK</div>
<div style="position:absolute;left:764px;top:382.5px;width:74px;height:61px;background:#c8dce6;border:1px solid #7b8a92;box-sizing:border-box"></div>
<div class="t" style="left:767.5px;top:386.28px;font-size:14px;line-height:14px;color:#111;">AUX</div>
<div class="t" style="left:767.5px;top:405.28px;font-size:14px;line-height:14px;color:#111;">Ph.Ax</div>
<div style="position:absolute;left:765px;top:423.5px;width:72px;height:19px;background:#1d9be2"></div>
<div class="t" style="left:767.5px;top:424.78px;font-size:14px;line-height:14px;color:#ffffff;">L.Ax</div>
<svg width="18" height="26" style="position:absolute;left:823.5px;top:358px" viewBox="0 0 18 26"><path d="M1.2 1.2 L1.2 20.5 L5.6 16.4 L9.2 24.3 L12.4 22.9 L8.9 15.2 L15.2 15.2 Z" fill="#fff" stroke="#000" stroke-width="1.2" stroke-linejoin="miter"/></svg>
</body></html>
